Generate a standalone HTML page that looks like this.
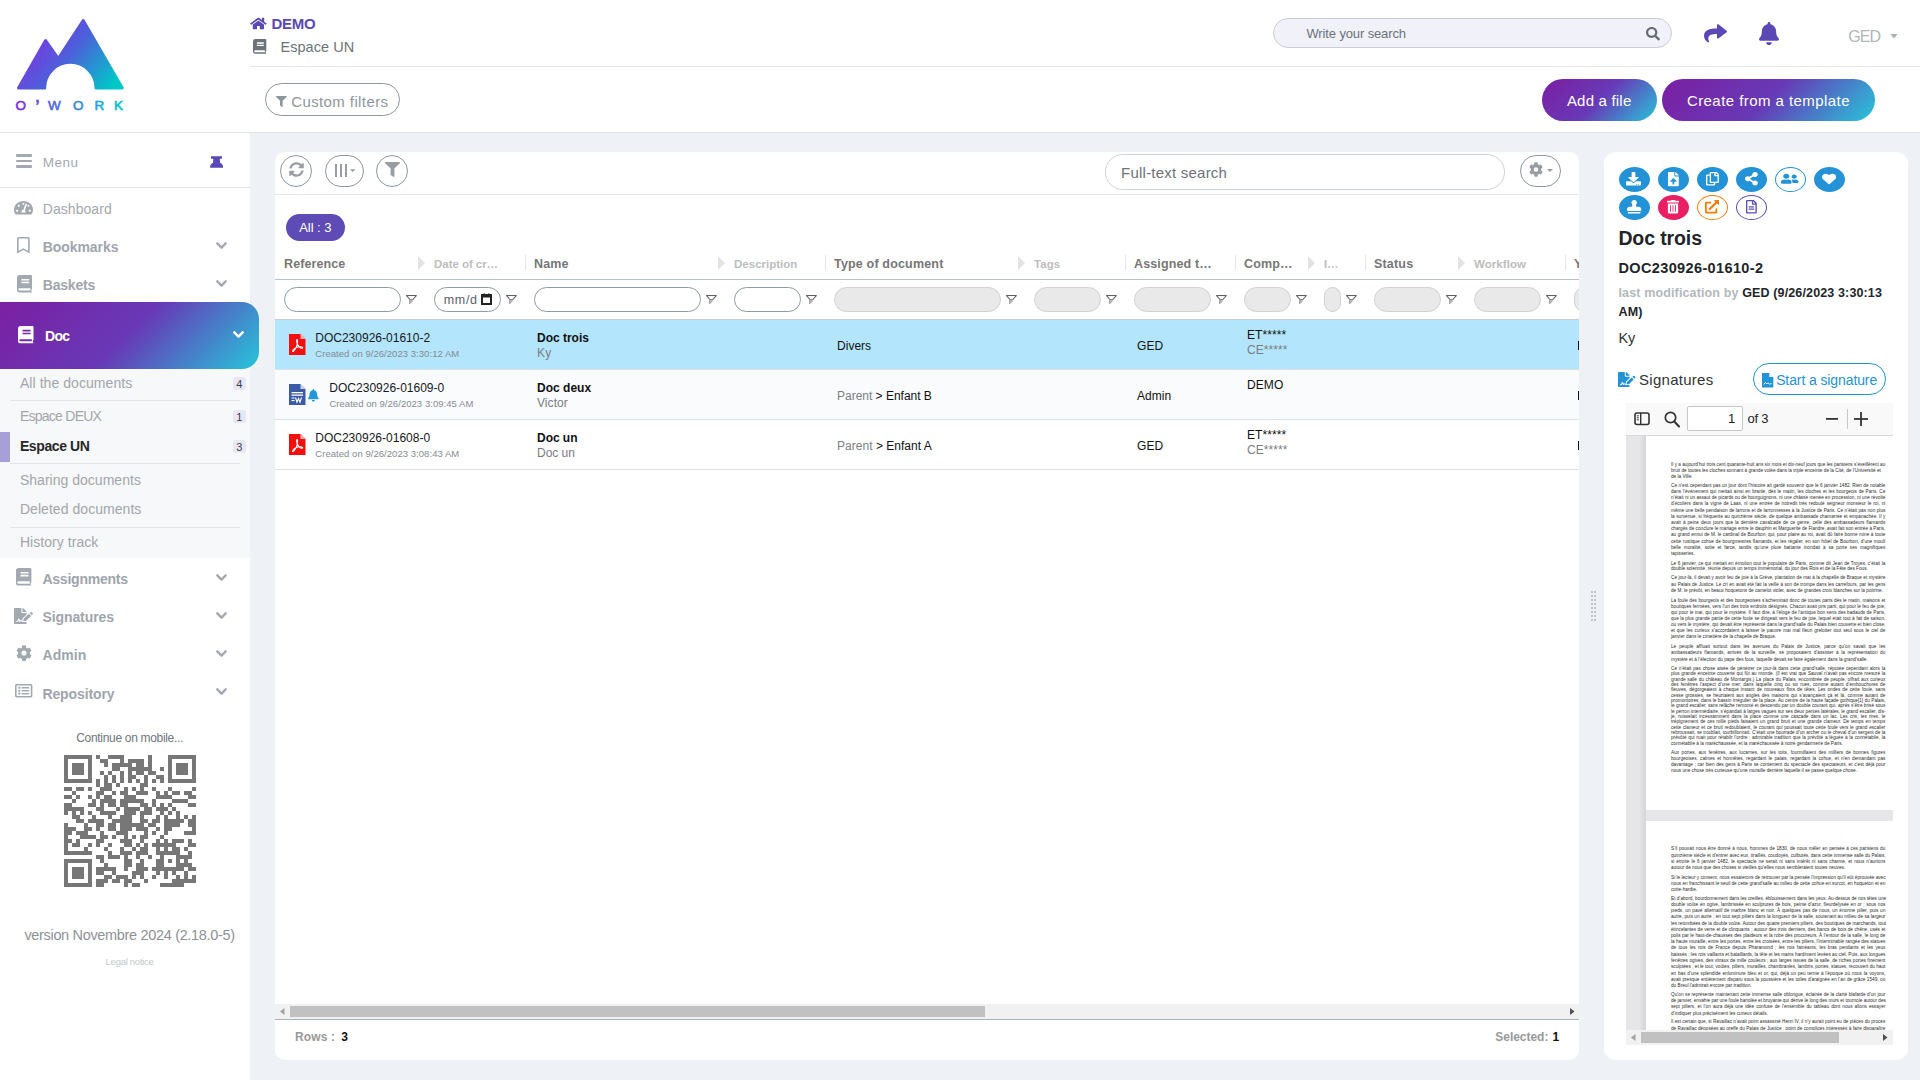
<!DOCTYPE html>
<html><head><meta charset="utf-8">
<style>
*{box-sizing:border-box;margin:0;padding:0}
html,body{width:1920px;height:1080px;overflow:hidden}
body{background:#eef1f6;font-family:"Liberation Sans",sans-serif;position:relative;color:#212529}
.a{position:absolute}
.ic{position:absolute;display:block;overflow:visible}
.t{position:absolute;white-space:nowrap;line-height:1}
.grad{background:linear-gradient(135deg,#7b1fa2 0%,#673ab7 50%,#26c6da 100%)}
</style></head><body>
<div class="a" style="left:0px;top:0px;width:250px;height:1080px;background:#fff"></div>
<div class="a" style="left:250px;top:0px;width:1670px;height:132px;background:#fff"></div>
<div class="a" style="left:0px;top:132px;width:1920px;height:1px;background:#dfe3e8"></div>
<div class="a" style="left:250px;top:66px;width:1670px;height:1px;background:#e3e7eb"></div>
<svg class="ic" style="left:0;top:0;width:140px;height:120px" viewBox="0 0 140 120">
<defs><linearGradient id="lg" x1="0" y1="0.25" x2="1" y2="0.8" gradientUnits="objectBoundingBox">
<stop offset="0" stop-color="#8a2be2"/><stop offset="0.5" stop-color="#4a62da"/><stop offset="1" stop-color="#00c8c8"/></linearGradient>
<linearGradient id="lt" x1="15" y1="0" x2="124" y2="0" gradientUnits="userSpaceOnUse">
<stop offset="0" stop-color="#7d2ae8"/><stop offset="0.5" stop-color="#3f7fd8"/><stop offset="1" stop-color="#00c4cc"/></linearGradient></defs>
<path d="M18.5,88 L45.6,40.5 L58.3,58.5 L83.2,20.5 L122.3,88 L96,88 A25.65,25.65 0 0 0 44.7,88 Z" fill="url(#lg)" stroke="url(#lg)" stroke-width="3" stroke-linejoin="round"/>
<g fill="url(#lt)" stroke="url(#lt)" stroke-width="0.6" font-family="Liberation Sans" font-size="13.5" font-weight="normal">
<text x="15.5" y="109.6">O</text><text x="35.5" y="110" font-size="14" font-weight="bold">’</text><text x="48" y="109.6">W</text><text x="73" y="109.6">O</text><text x="94.5" y="109.6">R</text><text x="114" y="109.6">K</text></g>
</svg>
<div class="a" style="left:16px;top:154px;width:15.5px;height:2.6px;background:#a3a9b0;border-radius:1px"></div>
<div class="a" style="left:16px;top:159.5px;width:15.5px;height:2.6px;background:#a3a9b0;border-radius:1px"></div>
<div class="a" style="left:16px;top:165px;width:15.5px;height:2.6px;background:#a3a9b0;border-radius:1px"></div>
<div class="t" style="left:42.76px;top:155.57px;font-size:13.5px;font-weight:400;color:#a3a9b0;font-family:&quot;Liberation Sans&quot;,sans-serif;letter-spacing:0.466px;">Menu</div>
<svg class="ic" style="left:204px;top:150px;width:26px;height:22px" viewBox="0 0 26 22"><path d="M7.3,6.2 H17.7 Q18,6.2 18,6.6 V8.5 Q18,8.8 17.6,8.8 H15.8 L16.1,12.8 Q19.3,14.3 19.1,17.3 Q19.1,17.8 18.6,17.8 H6.6 Q6.1,17.8 6.1,17.3 Q6,14.3 9.1,12.8 L9.3,8.8 H7.3 Q7,8.8 7,8.5 V6.6 Q7,6.2 7.3,6.2Z" fill="#5b48b8"/></svg>
<div class="a" style="left:0px;top:187px;width:250px;height:1px;background:#dfe3e8"></div>
<svg class="ic" style="left:14px;top:199.5px;width:19px;height:15.5px" viewBox="0 0 576 512" preserveAspectRatio="none"><path fill="#a3a9b0" fill-rule="evenodd" d="M288 32C128.94 32 0 160.94 0 320c0 52.8 14.25 102.26 39.06 144.8 5.61 9.62 16.3 15.2 27.44 15.2h443c11.14 0 21.83-5.58 27.44-15.2C561.75 422.26 576 372.8 576 320c0-159.06-128.94-288-288-288zm0 64c14.71 0 26.58 10.13 30.32 23.65-1.11 2.26-2.64 4.23-3.45 6.67l-9.22 27.67c-5.13 3.49-10.97 6.01-17.64 6.01-17.67 0-32-14.33-32-32S270.33 96 288 96zM96 384c-17.67 0-32-14.33-32-32s14.33-32 32-32 32 14.33 32 32-14.330 32-32 32zm48-160c-17.67 0-32-14.33-32-32s14.33-32 32-32 32 14.33 32 32-14.33 32-32 32zm246.77-72.41l-61.33 184C343.13 347.33 352 364.54 352 384c0 11.72-3.38 22.55-8.88 32H232.88c-5.5-9.45-8.88-20.28-8.88-32 0-33.94 26.5-61.43 59.9-63.59l61.34-184.01c4.17-12.56 17.73-19.45 30.36-15.17 12.57 4.19 19.35 17.79 15.17 30.36zm14.66 57.2l15.52-46.55c3.47-1.29 7.13-2.23 11.05-2.23 17.67 0 32 14.33 32 32s-14.33 32-32 32c-11.38-.01-20.89-6.28-26.57-15.22zM480 384c-17.67 0-32-14.33-32-32s14.33-32 32-32 32 14.33 32 32-14.33 32-32 32z"/></svg>
<div class="t" style="left:42.74px;top:202.15px;font-size:14px;font-weight:400;color:#a3a9b0;font-family:&quot;Liberation Sans&quot;,sans-serif;letter-spacing:0.064px;">Dashboard</div>
<svg class="ic" style="left:17.3px;top:237px;width:12.7px;height:16.6px" viewBox="0 0 384 512" preserveAspectRatio="none"><path fill="#a3a9b0" fill-rule="evenodd" d="M336 0H48C21.49 0 0 21.49 0 48v464l192-112 192 112V48c0-26.51-21.49-48-48-48zm0 428.43l-144-84-144 84V54a6 6 0 0 1 6-6h276c3.314 0 6 2.683 6 5.996V428.43z"/></svg>
<div class="t" style="left:42.74px;top:239.85px;font-size:14px;font-weight:700;color:#9ea5ad;font-family:&quot;Liberation Sans&quot;,sans-serif;letter-spacing:-0.065px;">Bookmarks</div>
<svg class="ic" style="left:216px;top:242px;width:11px;height:7.5px" viewBox="0 0 11 7.5"><path d="M1.3,1.3L5.5,5.6L9.7,1.3" fill="none" stroke="#a3a9b0" stroke-width="2.4" stroke-linecap="round" stroke-linejoin="round"/></svg>
<svg class="ic" style="left:16.5px;top:274.6px;width:15px;height:17.4px" viewBox="0 0 15 17" preserveAspectRatio="none"><path fill="#a3a9b0" fill-rule="evenodd" d="M2.6,0H14Q15,0 15,1V13.6Q15,14.3 14.3,14.6V16.1Q15,16.3 15,16.7V17H2.6Q0,17 0,14.4V2.6Q0,0 2.6,0ZM4.4,3.8H12.2V5.4H4.4ZM4.4,6.6H12.2V8.1H4.4ZM2.4,12.9H13.4V15.1H2.4Q1.3,15.1 1.3,14Q1.3,12.9 2.4,12.9Z"/></svg>
<div class="t" style="left:42.74px;top:277.65px;font-size:14px;font-weight:700;color:#9ea5ad;font-family:&quot;Liberation Sans&quot;,sans-serif;letter-spacing:-0.189px;">Baskets</div>
<svg class="ic" style="left:216px;top:280px;width:11px;height:7.5px" viewBox="0 0 11 7.5"><path d="M1.3,1.3L5.5,5.6L9.7,1.3" fill="none" stroke="#a3a9b0" stroke-width="2.4" stroke-linecap="round" stroke-linejoin="round"/></svg>
<div class="a grad" style="left:0;top:302px;width:259px;height:67px;border-radius:0 17px 17px 0"></div>
<svg class="ic" style="left:18px;top:325.7px;width:15.5px;height:17.3px" viewBox="0 0 15 17" preserveAspectRatio="none"><path fill="#fff" fill-rule="evenodd" d="M2.6,0H14Q15,0 15,1V13.6Q15,14.3 14.3,14.6V16.1Q15,16.3 15,16.7V17H2.6Q0,17 0,14.4V2.6Q0,0 2.6,0ZM4.4,3.8H12.2V5.4H4.4ZM4.4,6.6H12.2V8.1H4.4ZM2.4,12.9H13.4V15.1H2.4Q1.3,15.1 1.3,14Q1.3,12.9 2.4,12.9Z"/></svg>
<div class="t" style="left:45.04px;top:329.15px;font-size:14px;font-weight:700;color:#fff;font-family:&quot;Liberation Sans&quot;,sans-serif;letter-spacing:-0.691px;">Doc</div>
<svg class="ic" style="left:233px;top:330.8px;width:11px;height:7.5px" viewBox="0 0 11 7.5"><path d="M1.3,1.3L5.5,5.6L9.7,1.3" fill="none" stroke="#fff" stroke-width="2.4" stroke-linecap="round" stroke-linejoin="round"/></svg>
<div class="a" style="left:0px;top:369px;width:250px;height:189px;background:#f7f8fa"></div>
<div class="t" style="left:19.94px;top:376.05px;font-size:14px;font-weight:400;color:#a2a6aa;font-family:&quot;Liberation Sans&quot;,sans-serif;letter-spacing:0.064px;">All the documents</div>
<div class="a" style="left:233px;top:376.5px;width:12.8px;height:13.7px;background:#e9e6f5;border-radius:3px"></div>
<div class="t" style="left:236.36px;top:378.69px;font-size:11px;font-weight:400;color:#3a3f44;font-family:&quot;Liberation Sans&quot;,sans-serif;letter-spacing:0.145px;">4</div>
<div class="a" style="left:10px;top:400px;width:230px;height:1px;background:#e1e4e8"></div>
<div class="t" style="left:19.94px;top:409.15px;font-size:14px;font-weight:400;color:#a2a6aa;font-family:&quot;Liberation Sans&quot;,sans-serif;letter-spacing:-0.746px;">Espace DEUX</div>
<div class="a" style="left:233px;top:409.8px;width:12.8px;height:13.7px;background:#e9e6f5;border-radius:3px"></div>
<div class="t" style="left:236.36px;top:411.99px;font-size:11px;font-weight:400;color:#3a3f44;font-family:&quot;Liberation Sans&quot;,sans-serif;letter-spacing:0.145px;">1</div>
<div class="a" style="left:0px;top:432px;width:10px;height:30px;background:#a69fd8"></div>
<div class="t" style="left:19.94px;top:438.95px;font-size:14px;font-weight:700;color:#25282b;font-family:&quot;Liberation Sans&quot;,sans-serif;letter-spacing:-0.408px;">Espace UN</div>
<div class="a" style="left:233px;top:439.6px;width:12.8px;height:13.7px;background:#e9e6f5;border-radius:3px"></div>
<div class="t" style="left:236.36px;top:441.79px;font-size:11px;font-weight:400;color:#3a3f44;font-family:&quot;Liberation Sans&quot;,sans-serif;letter-spacing:0.145px;">3</div>
<div class="a" style="left:10px;top:463px;width:230px;height:1px;background:#e1e4e8"></div>
<div class="t" style="left:19.94px;top:473.15px;font-size:14px;font-weight:400;color:#a2a6aa;font-family:&quot;Liberation Sans&quot;,sans-serif;letter-spacing:0.020px;">Sharing documents</div>
<div class="t" style="left:19.94px;top:502.15px;font-size:14px;font-weight:400;color:#a2a6aa;font-family:&quot;Liberation Sans&quot;,sans-serif;letter-spacing:0.049px;">Deleted documents</div>
<div class="a" style="left:10px;top:526.5px;width:230px;height:1px;background:#e1e4e8"></div>
<div class="t" style="left:19.94px;top:535.45px;font-size:14px;font-weight:400;color:#a2a6aa;font-family:&quot;Liberation Sans&quot;,sans-serif;letter-spacing:0.053px;">History track</div>
<svg class="ic" style="left:16px;top:568px;width:15.4px;height:17.6px" viewBox="0 0 15 17" preserveAspectRatio="none"><path fill="#a3a9b0" fill-rule="evenodd" d="M2.6,0H14Q15,0 15,1V13.6Q15,14.3 14.3,14.6V16.1Q15,16.3 15,16.7V17H2.6Q0,17 0,14.4V2.6Q0,0 2.6,0ZM4.4,3.8H12.2V5.4H4.4ZM4.4,6.6H12.2V8.1H4.4ZM2.4,12.9H13.4V15.1H2.4Q1.3,15.1 1.3,14Q1.3,12.9 2.4,12.9Z"/></svg>
<div class="t" style="left:42.44px;top:572.15px;font-size:14px;font-weight:700;color:#9ea5ad;font-family:&quot;Liberation Sans&quot;,sans-serif;letter-spacing:-0.231px;">Assignments</div>
<svg class="ic" style="left:216px;top:573.5px;width:11px;height:7.5px" viewBox="0 0 11 7.5"><path d="M1.3,1.3L5.5,5.6L9.7,1.3" fill="none" stroke="#a3a9b0" stroke-width="2.4" stroke-linecap="round" stroke-linejoin="round"/></svg>
<svg class="ic" style="left:14px;top:607.6px;width:19px;height:16px" viewBox="0 0 576 512" preserveAspectRatio="none"><path fill="#a3a9b0" fill-rule="evenodd" d="M218.17 424.14c-2.95-5.92-8.09-6.52-10.17-6.52s-7.22.59-10.02 6.19l-7.67 15.34c-6.37 12.78-25.03 11.37-29.48-2.09L144 386.59l-10.61 31.88c-5.89 17.66-22.38 29.53-41 29.53H80c-8.84 0-16-7.16-16-16s7.16-16 16-16h12.39c4.83 0 9.11-3.08 10.64-7.66l18.19-54.64c3.3-9.81 12.44-16.41 22.78-16.41s19.48 6.59 22.77 16.41l13.88 41.64c19.75-16.19 54.06-9.7 66 14.16 1.89 3.78 5.49 5.95 9.36 6.26v-82.12l128-127.09V160H248c-13.2 0-24-10.8-24-24V0H24C10.7 0 0 10.7 0 24v464c0 13.3 10.7 24 24 24h336c13.3 0 24-10.7 24-24v-40l-128-.11c-16.12-.31-30.58-9.28-37.83-23.75zM384 121.9c0-6.3-2.5-12.4-7-16.9L279.1 7c-4.5-4.5-10.6-7-17-7H256v128h128v-6.1zm-96 225.06V416h68.99l161.68-162.78-67.88-67.88L288 346.96zm280.54-179.63l-31.870-31.87c-9.94-9.94-26.07-9.94-36.01 0l-27.25 27.25 67.88 67.88 27.25-27.25c9.95-9.94 9.95-26.07 0-36.01z"/></svg>
<div class="t" style="left:42.44px;top:610.05px;font-size:14px;font-weight:700;color:#9ea5ad;font-family:&quot;Liberation Sans&quot;,sans-serif;letter-spacing:-0.088px;">Signatures</div>
<svg class="ic" style="left:216px;top:611.5px;width:11px;height:7.5px" viewBox="0 0 11 7.5"><path d="M1.3,1.3L5.5,5.6L9.7,1.3" fill="none" stroke="#a3a9b0" stroke-width="2.4" stroke-linecap="round" stroke-linejoin="round"/></svg>
<svg class="ic" style="left:16px;top:645px;width:16px;height:16.3px" viewBox="0 0 512 512" preserveAspectRatio="none"><path fill="#a3a9b0" fill-rule="evenodd" d="M487.4 315.7l-42.6-24.6c4.3-23.2 4.3-47 0-70.2l42.6-24.6c4.9-2.8 7.1-8.6 5.5-14-11.1-35.6-30-67.8-54.7-94.6-3.8-4.1-10-5.1-14.8-2.3L380.8 110c-17.9-15.4-38.5-27.3-60.8-35.1V25.8c0-5.6-3.9-10.5-9.4-11.7-36.7-8.2-74.3-7.8-109.2 0-5.5 1.2-9.4 6.1-9.4 11.7V75c-22.2 7.9-42.8 19.8-60.8 35.1L88.7 85.5c-4.9-2.8-11-1.9-14.8 2.3-24.7 26.7-43.6 58.9-54.7 94.6-1.7 5.4.6 11.2 5.5 14L67.3 221c-4.3 23.2-4.3 47 0 70.2l-42.6 24.6c-4.9 2.8-7.1 8.6-5.5 14 11.1 35.6 30 67.8 54.7 94.6 3.8 4.1 10 5.1 14.8 2.3l42.6-24.6c17.9 15.4 38.5 27.3 60.8 35.1v49.2c0 5.6 3.9 10.5 9.4 11.7 36.7 8.2 74.3 7.8 109.2 0 5.5-1.2 9.4-6.1 9.4-11.7v-49.2c22.2-7.9 42.8-19.8 60.8-35.1l42.6 24.6c4.9 2.8 11 1.9 14.8-2.3 24.7-26.7 43.6-58.9 54.7-94.6 1.5-5.5-.7-11.3-5.6-14.1zM256 336c-44.1 0-80-35.9-80-80s35.9-80 80-80 80 35.9 80 80-35.9 80-80 80z"/></svg>
<div class="t" style="left:42.44px;top:648.15px;font-size:14px;font-weight:700;color:#9ea5ad;font-family:&quot;Liberation Sans&quot;,sans-serif;letter-spacing:0.083px;">Admin</div>
<svg class="ic" style="left:216px;top:649.5px;width:11px;height:7.5px" viewBox="0 0 11 7.5"><path d="M1.3,1.3L5.5,5.6L9.7,1.3" fill="none" stroke="#a3a9b0" stroke-width="2.4" stroke-linecap="round" stroke-linejoin="round"/></svg>
<svg class="ic" style="left:15.4px;top:683px;width:17.4px;height:15.5px" viewBox="0 0 512 512" preserveAspectRatio="none"><path fill="#a3a9b0" fill-rule="evenodd" d="M464 32H48C21.49 32 0 53.49 0 80v352c0 26.51 21.49 48 48 48h416c26.51 0 48-21.49 48-48V80c0-26.51-21.49-48-48-48zm-6 400H54a6 6 0 0 1-6-6V86a6 6 0 0 1 6-6h404a6 6 0 0 1 6 6v340a6 6 0 0 1-6 6zm-42-92v24c0 6.627-5.373 12-12 12H204c-6.627 0-12-5.373-12-12v-24c0-6.627 5.373-12 12-12h200c6.627 0 12 5.373 12 12zm0-96v24c0 6.627-5.373 12-12 12H204c-6.627 0-12-5.373-12-12v-24c0-6.627 5.373-12 12-12h200c6.627 0 12 5.373 12 12zm0-96v24c0 6.627-5.373 12-12 12H204c-6.627 0-12-5.373-12-12v-24c0-6.627 5.373-12 12-12h200c6.627 0 12 5.373 12 12zm-252 12c0 19.882-16.118 36-36 36s-36-16.118-36-36 16.118-36 36-36 36 16.118 36 36zm0 96c0 19.882-16.118 36-36 36s-36-16.118-36-36 16.118-36 36-36 36 16.118 36 36zm0 96c0 19.882-16.118 36-36 36s-36-16.118-36-36 16.118-36 36-36 36 16.118 36 36z"/></svg>
<div class="t" style="left:42.44px;top:686.55px;font-size:14px;font-weight:700;color:#9ea5ad;font-family:&quot;Liberation Sans&quot;,sans-serif;letter-spacing:-0.114px;">Repository</div>
<svg class="ic" style="left:216px;top:687.5px;width:11px;height:7.5px" viewBox="0 0 11 7.5"><path d="M1.3,1.3L5.5,5.6L9.7,1.3" fill="none" stroke="#a3a9b0" stroke-width="2.4" stroke-linecap="round" stroke-linejoin="round"/></svg>
<div class="t" style="left:76.22px;top:731.54px;font-size:12px;font-weight:400;color:#6f767c;font-family:&quot;Liberation Sans&quot;,sans-serif;letter-spacing:-0.313px;">Continue on mobile...</div>
<svg class="ic" style="left:64px;top:755px;width:132px;height:132px" viewBox="0 0 132 132" shape-rendering="crispEdges"><path fill="#777" d="M0,0h28v4h-28zM32,0h4v4h-4zM44,0h16v4h-16zM84,0h4v4h-4zM104,0h28v4h-28zM0,4h4v4h-4zM24,4h4v4h-4zM36,4h8v4h-8zM56,4h4v4h-4zM64,4h16v4h-16zM84,4h4v4h-4zM104,4h4v4h-4zM128,4h4v4h-4zM0,8h4v4h-4zM8,8h12v4h-12zM24,8h4v4h-4zM40,8h4v4h-4zM48,8h20v4h-20zM72,8h8v4h-8zM84,8h4v4h-4zM104,8h4v4h-4zM112,8h12v4h-12zM128,8h4v4h-4zM0,12h4v4h-4zM8,12h12v4h-12zM24,12h4v4h-4zM48,12h8v4h-8zM64,12h24v4h-24zM96,12h4v4h-4zM104,12h4v4h-4zM112,12h12v4h-12zM128,12h4v4h-4zM0,16h4v4h-4zM8,16h12v4h-12zM24,16h4v4h-4zM36,16h4v4h-4zM44,16h4v4h-4zM56,16h4v4h-4zM64,16h4v4h-4zM72,16h8v4h-8zM84,16h8v4h-8zM104,16h4v4h-4zM112,16h12v4h-12zM128,16h4v4h-4zM0,20h4v4h-4zM24,20h4v4h-4zM40,20h4v4h-4zM48,20h4v4h-4zM56,20h4v4h-4zM64,20h8v4h-8zM80,20h4v4h-4zM92,20h8v4h-8zM104,20h4v4h-4zM128,20h4v4h-4zM0,24h28v4h-28zM32,24h4v4h-4zM40,24h4v4h-4zM48,24h4v4h-4zM56,24h4v4h-4zM64,24h4v4h-4zM72,24h4v4h-4zM80,24h4v4h-4zM88,24h4v4h-4zM96,24h4v4h-4zM104,24h28v4h-28zM32,28h4v4h-4zM40,28h8v4h-8zM52,28h4v4h-4zM76,28h8v4h-8zM0,32h8v4h-8zM12,32h8v4h-8zM24,32h4v4h-4zM36,32h12v4h-12zM60,32h4v4h-4zM68,32h4v4h-4zM76,32h4v4h-4zM88,32h4v4h-4zM104,32h4v4h-4zM128,32h4v4h-4zM8,36h4v4h-4zM32,36h8v4h-8zM48,36h4v4h-4zM56,36h8v4h-8zM72,36h12v4h-12zM92,36h4v4h-4zM100,36h4v4h-4zM108,36h8v4h-8zM120,36h8v4h-8zM0,40h8v4h-8zM12,40h4v4h-4zM24,40h4v4h-4zM32,40h4v4h-4zM40,40h8v4h-8zM60,40h12v4h-12zM92,40h16v4h-16zM124,40h8v4h-8zM8,44h4v4h-4zM28,44h4v4h-4zM36,44h16v4h-16zM56,44h24v4h-24zM88,44h4v4h-4zM108,44h16v4h-16zM0,48h8v4h-8zM24,48h8v4h-8zM36,48h4v4h-4zM44,48h8v4h-8zM56,48h8v4h-8zM76,48h8v4h-8zM88,48h4v4h-4zM96,48h4v4h-4zM104,48h4v4h-4zM124,48h8v4h-8zM0,52h20v4h-20zM32,52h8v4h-8zM52,52h4v4h-4zM60,52h16v4h-16zM80,52h8v4h-8zM92,52h12v4h-12zM108,52h4v4h-4zM0,56h4v4h-4zM8,56h4v4h-4zM16,56h4v4h-4zM24,56h4v4h-4zM36,56h16v4h-16zM60,56h12v4h-12zM76,56h12v4h-12zM96,56h4v4h-4zM104,56h4v4h-4zM112,56h4v4h-4zM8,60h8v4h-8zM28,60h4v4h-4zM44,60h4v4h-4zM56,60h12v4h-12zM76,60h4v4h-4zM92,60h4v4h-4zM100,60h4v4h-4zM112,60h4v4h-4zM120,60h4v4h-4zM128,60h4v4h-4zM12,64h8v4h-8zM24,64h16v4h-16zM48,64h20v4h-20zM76,64h8v4h-8zM88,64h8v4h-8zM100,64h20v4h-20zM124,64h8v4h-8zM0,68h4v4h-4zM20,68h4v4h-4zM32,68h8v4h-8zM44,68h8v4h-8zM56,68h24v4h-24zM84,68h8v4h-8zM100,68h16v4h-16zM124,68h8v4h-8zM0,72h12v4h-12zM20,72h8v4h-8zM32,72h4v4h-4zM44,72h8v4h-8zM56,72h12v4h-12zM72,72h12v4h-12zM92,72h4v4h-4zM100,72h8v4h-8zM128,72h4v4h-4zM0,76h8v4h-8zM12,76h12v4h-12zM36,76h4v4h-4zM52,76h12v4h-12zM80,76h4v4h-4zM88,76h4v4h-4zM100,76h4v4h-4zM120,76h12v4h-12zM0,80h4v4h-4zM16,80h16v4h-16zM36,80h8v4h-8zM48,80h4v4h-4zM60,80h4v4h-4zM68,80h4v4h-4zM76,80h8v4h-8zM96,80h4v4h-4zM0,84h8v4h-8zM12,84h4v4h-4zM32,84h8v4h-8zM56,84h12v4h-12zM76,84h4v4h-4zM92,84h4v4h-4zM100,84h4v4h-4zM108,84h12v4h-12zM124,84h4v4h-4zM0,88h4v4h-4zM8,88h8v4h-8zM24,88h4v4h-4zM32,88h4v4h-4zM44,88h4v4h-4zM60,88h8v4h-8zM72,88h4v4h-4zM80,88h4v4h-4zM88,88h24v4h-24zM124,88h8v4h-8zM0,92h4v4h-4zM20,92h4v4h-4zM40,92h4v4h-4zM56,92h4v4h-4zM68,92h4v4h-4zM76,92h8v4h-8zM92,92h4v4h-4zM100,92h4v4h-4zM108,92h8v4h-8zM120,92h4v4h-4zM0,96h28v4h-28zM44,96h4v4h-4zM56,96h12v4h-12zM72,96h12v4h-12zM92,96h24v4h-24zM124,96h4v4h-4zM32,100h8v4h-8zM44,100h12v4h-12zM60,100h4v4h-4zM72,100h4v4h-4zM84,100h4v4h-4zM96,100h4v4h-4zM112,100h16v4h-16zM0,104h28v4h-28zM36,104h4v4h-4zM60,104h8v4h-8zM76,104h4v4h-4zM92,104h8v4h-8zM104,104h4v4h-4zM112,104h4v4h-4zM120,104h4v4h-4zM0,108h4v4h-4zM24,108h4v4h-4zM40,108h4v4h-4zM60,108h8v4h-8zM72,108h8v4h-8zM92,108h8v4h-8zM112,108h16v4h-16zM0,112h4v4h-4zM8,112h12v4h-12zM24,112h4v4h-4zM32,112h20v4h-20zM60,112h4v4h-4zM72,112h12v4h-12zM88,112h32v4h-32zM124,112h8v4h-8zM0,116h4v4h-4zM8,116h12v4h-12zM24,116h4v4h-4zM32,116h8v4h-8zM48,116h4v4h-4zM68,116h12v4h-12zM92,116h4v4h-4zM100,116h4v4h-4zM108,116h4v4h-4zM120,116h4v4h-4zM0,120h4v4h-4zM8,120h12v4h-12zM24,120h4v4h-4zM40,120h8v4h-8zM52,120h12v4h-12zM68,120h4v4h-4zM76,120h4v4h-4zM88,120h4v4h-4zM100,120h4v4h-4zM112,120h4v4h-4zM120,120h4v4h-4zM128,120h4v4h-4zM0,124h4v4h-4zM24,124h4v4h-4zM32,124h12v4h-12zM48,124h8v4h-8zM60,124h8v4h-8zM80,124h4v4h-4zM108,124h24v4h-24zM0,128h28v4h-28zM32,128h8v4h-8zM60,128h4v4h-4zM68,128h8v4h-8zM96,128h24v4h-24z"/></svg>
<div class="t" style="left:24.42px;top:928.43px;font-size:14.5px;font-weight:400;color:#8d9296;font-family:&quot;Liberation Sans&quot;,sans-serif;letter-spacing:-0.329px;">version Novembre 2024 (2.18.0-5)</div>
<div class="t" style="left:105.62px;top:956.96px;font-size:9.5px;font-weight:400;color:#c3c7cb;font-family:&quot;Liberation Sans&quot;,sans-serif;letter-spacing:-0.272px;">Legal notice</div>
<svg class="ic" style="left:250px;top:16.8px;width:16.8px;height:13px" viewBox="0 0 576 512" preserveAspectRatio="none"><path fill="#5b48b5" fill-rule="evenodd" d="M280.37 148.26L96 300.11V464a16 16 0 0 0 16 16l112.06-.29a16 16 0 0 0 15.92-16V368a16 16 0 0 1 16-16h64a16 16 0 0 1 16 16v95.64a16 16 0 0 0 16 16.05L464 480a16 16 0 0 0 16-16V300L295.67 148.26a12.190 12.190 0 0 0-15.3 0zM571.6 251.47L488 182.56V44.05a12 12 0 0 0-12-12h-56a12 12 0 0 0-12 12v72.61L318.47 43a48 48 0 0 0-61 0L4.34 251.47a12 12 0 0 0-1.6 16.9l25.5 31A12 12 0 0 0 45.15 301l235.22-193.74a12.19 12.19 0 0 1 15.3 0L530.9 301a12 12 0 0 0 16.9-1.6l25.5-31a12 12 0 0 0-1.7-16.93z"/></svg>
<div class="t" style="left:271.40px;top:16.10px;font-size:15px;font-weight:700;color:#5b48b5;font-family:&quot;Liberation Sans&quot;,sans-serif;letter-spacing:-0.238px;">DEMO</div>
<svg class="ic" style="left:252.7px;top:39px;width:13.3px;height:14.8px" viewBox="0 0 15 17" preserveAspectRatio="none"><path fill="#6c737a" fill-rule="evenodd" d="M2.6,0H14Q15,0 15,1V13.6Q15,14.3 14.3,14.6V16.1Q15,16.3 15,16.7V17H2.6Q0,17 0,14.4V2.6Q0,0 2.6,0ZM4.4,3.8H12.2V5.4H4.4ZM4.4,6.6H12.2V8.1H4.4ZM2.4,12.9H13.4V15.1H2.4Q1.3,15.1 1.3,14Q1.3,12.9 2.4,12.9Z"/></svg>
<div class="t" style="left:280.42px;top:39.53px;font-size:14.5px;font-weight:400;color:#6c737a;font-family:&quot;Liberation Sans&quot;,sans-serif;letter-spacing:0.075px;">Espace UN</div>
<div class="a" style="left:265px;top:83.2px;width:135px;height:33.2px;border:1px solid #8f969c;border-radius:17px;background:#fff"></div>
<svg class="ic" style="left:276.3px;top:96px;width:10.7px;height:11px" viewBox="0 0 512 512" preserveAspectRatio="none"><path fill="#8f969c" fill-rule="evenodd" d="M487.976 0H24.028C2.71 0-8.047 25.866 7.058 40.971L192 225.941V432c0 7.831 3.821 15.17 10.237 19.662l80 55.98C298.02 518.69 320 507.493 320 487.98V225.941l184.947-184.97C520.021 25.896 509.338 0 487.976 0z"/></svg>
<div class="t" style="left:291.20px;top:94.30px;font-size:15px;font-weight:400;color:#8f969c;font-family:&quot;Liberation Sans&quot;,sans-serif;letter-spacing:0.397px;">Custom filters</div>
<div class="a" style="left:1273px;top:18px;width:399px;height:30.4px;background:#f0f1f9;border:1px solid #c8cdd5;border-radius:15px"></div>
<div class="t" style="left:1306.48px;top:27.00px;font-size:13px;font-weight:400;color:#6c737a;font-family:&quot;Liberation Sans&quot;,sans-serif;letter-spacing:-0.131px;">Write your search</div>
<svg class="ic" style="left:1646px;top:27px;width:14px;height:13.5px" viewBox="0 0 512 512" preserveAspectRatio="none"><path fill="#646b72" fill-rule="evenodd" d="M505 442.7L405.3 343c-4.5-4.5-10.6-7-17-7H372c27.6-35.3 44-79.7 44-128C416 93.1 322.9 0 208 0S0 93.1 0 208s93.1 208 208 208c48.3 0 92.7-16.4 128-44v16.3c0 6.4 2.5 12.5 7 17l99.7 99.7c9.4 9.4 24.6 9.4 33.9 0l28.3-28.3c9.4-9.4 9.4-24.6.1-34zM208 336c-70.7 0-128-57.2-128-128 0-70.7 57.2-128 128-128 70.7 0 128 57.2 128 128 0 70.7-57.2 128-128 128z"/></svg>
<svg class="ic" style="left:1704px;top:22.6px;width:23px;height:20.8px" viewBox="0 0 512 512" preserveAspectRatio="none"><path fill="#5b48b5" fill-rule="evenodd" d="M503.691 189.836L327.687 37.851C312.281 24.546 288 35.347 288 56.015v80.053C127.371 137.907 0 170.1 0 322.326c0 61.441 39.581 122.309 83.333 154.132 13.653 9.931 33.111-2.533 28.077-18.631C66.066 312.814 132.917 274.316 288 272.085V360c0 20.7 24.3 31.453 39.687 18.164l176.004-152c11.071-9.562 11.086-26.753 0-36.328z"/></svg>
<svg class="ic" style="left:1759px;top:21.7px;width:20px;height:23px" viewBox="0 0 448 512" preserveAspectRatio="none"><path fill="#5b48b5" fill-rule="evenodd" d="M224 512c35.32 0 63.97-28.65 63.97-64H160.03c0 35.35 28.65 64 63.97 64zm215.39-149.71c-19.32-20.76-55.47-51.99-55.470-154.29 0-77.7-54.48-139.9-127.94-155.16V32c0-17.67-14.32-32-31.98-32s-31.98 14.33-31.98 32v20.84C118.56 68.1 64.08 130.3 64.08 208c0 102.3-36.15 133.53-55.47 154.29-6 6.45-8.66 14.16-8.61 21.71.11 16.4 12.98 32 32.1 32h383.8c19.12 0 32-15.6 32.1-32 .05-7.55-2.61-15.27-8.61-21.710z"/></svg>
<div class="t" style="left:1848.16px;top:29.46px;font-size:16px;font-weight:400;color:#afb6bc;font-family:&quot;Liberation Sans&quot;,sans-serif;letter-spacing:-0.851px;">GED</div>
<svg class="ic" style="left:1890px;top:34px;width:8px;height:4.5px" viewBox="0 0 8 5"><path d="M0,0H8L4,5Z" fill="#a9b0b6"/></svg>
<div class="a grad" style="left:1542px;top:79px;width:115px;height:42px;border-radius:21px"></div>
<div class="t" style="left:1566.90px;top:93.30px;font-size:15px;font-weight:400;color:#fff;font-family:&quot;Liberation Sans&quot;,sans-serif;letter-spacing:0.200px;">Add a file</div>
<div class="a grad" style="left:1662px;top:79px;width:213px;height:42px;border-radius:21px"></div>
<div class="t" style="left:1686.90px;top:93.30px;font-size:15px;font-weight:400;color:#fff;font-family:&quot;Liberation Sans&quot;,sans-serif;letter-spacing:0.438px;">Create from a template</div>
<div class="a" style="left:275px;top:152px;width:1304px;height:908px;background:#fff;border-radius:10px"></div>
<div class="a" style="left:280px;top:155px;width:32px;height:32px;border:1px solid #8f969c;border-radius:50%"></div>
<svg class="ic" style="left:288.5px;top:162px;width:15px;height:15px" viewBox="0 0 512 512" preserveAspectRatio="none"><path fill="#979da3" fill-rule="evenodd" d="M370.72 133.28C339.458 104.008 298.888 87.962 255.848 88c-77.458.068-144.328 53.178-162.791 126.85-1.344 5.363-6.122 9.15-11.651 9.15H24.103c-7.498 0-13.194-6.807-11.807-14.176C33.933 94.924 134.813 8 256 8c66.448 0 126.791 26.136 171.315 68.685L463.03 40.97C478.149 25.851 504 36.559 504 57.941V192c0 13.255-10.745 24-24 24H345.941c-21.382 0-32.09-25.851-16.971-40.971l41.75-41.749zM32 296h134.059c21.382 0 32.09 25.851 16.971 40.971l-41.75 41.75c31.262 29.273 71.835 45.319 114.876 45.28 77.418-.07 144.315-53.144 162.787-126.849 1.344-5.363 6.122-9.15 11.651-9.15h57.304c7.498 0 13.194 6.807 11.807 14.176C478.067 417.076 377.187 504 256 504c-66.448 0-126.791-26.136-171.315-68.685L48.97 471.03C33.851 486.149 8 475.441 8 454.059V320c0-13.255 10.745-24 24-24z"/></svg>
<div class="a" style="left:325px;top:155px;width:39px;height:32px;border:1px solid #8f969c;border-radius:16px"></div>
<div class="a" style="left:334.5px;top:164px;width:2.2px;height:13px;background:#979da3"></div>
<div class="a" style="left:339.5px;top:164px;width:2.2px;height:13px;background:#979da3"></div>
<div class="a" style="left:344.5px;top:164px;width:2.2px;height:13px;background:#979da3"></div>
<svg class="ic" style="left:349.5px;top:169px;width:5.5px;height:3px" viewBox="0 0 6 3"><path d="M0,0H6L3,3Z" fill="#979da3"/></svg>
<div class="a" style="left:376px;top:155px;width:32px;height:32px;border:1px solid #8f969c;border-radius:50%"></div>
<svg class="ic" style="left:385px;top:162px;width:15px;height:15px" viewBox="0 0 512 512" preserveAspectRatio="none"><path fill="#979da3" fill-rule="evenodd" d="M487.976 0H24.028C2.71 0-8.047 25.866 7.058 40.971L192 225.941V432c0 7.831 3.821 15.17 10.237 19.662l80 55.98C298.02 518.69 320 507.493 320 487.98V225.941l184.947-184.97C520.021 25.896 509.338 0 487.976 0z"/></svg>
<div class="a" style="left:275px;top:194px;width:1304px;height:1px;background:#e3e6ea"></div>
<div class="a" style="left:1105px;top:154px;width:399.5px;height:36px;border:1px solid #ccd3da;border-radius:18px;background:#fff"></div>
<div class="t" style="left:1121.10px;top:165.30px;font-size:15px;font-weight:400;color:#6c737a;font-family:&quot;Liberation Sans&quot;,sans-serif;letter-spacing:0.219px;">Full-text search</div>
<div class="a" style="left:1520px;top:155px;width:41px;height:32px;border:1px solid #8f969c;border-radius:16px"></div>
<svg class="ic" style="left:1529px;top:162px;width:14px;height:15px" viewBox="0 0 512 512" preserveAspectRatio="none"><path fill="#979da3" fill-rule="evenodd" d="M487.4 315.7l-42.6-24.6c4.3-23.2 4.3-47 0-70.2l42.6-24.6c4.9-2.8 7.1-8.6 5.5-14-11.1-35.6-30-67.8-54.7-94.6-3.8-4.1-10-5.1-14.8-2.3L380.8 110c-17.9-15.4-38.5-27.3-60.8-35.1V25.8c0-5.6-3.9-10.5-9.4-11.7-36.7-8.2-74.3-7.8-109.2 0-5.5 1.2-9.4 6.1-9.4 11.7V75c-22.2 7.9-42.8 19.8-60.8 35.1L88.7 85.5c-4.9-2.8-11-1.9-14.8 2.3-24.7 26.7-43.6 58.9-54.7 94.6-1.7 5.4.6 11.2 5.5 14L67.3 221c-4.3 23.2-4.3 47 0 70.2l-42.6 24.6c-4.9 2.8-7.1 8.6-5.5 14 11.1 35.6 30 67.8 54.7 94.6 3.8 4.1 10 5.1 14.8 2.3l42.6-24.6c17.9 15.4 38.5 27.3 60.8 35.1v49.2c0 5.6 3.9 10.5 9.4 11.7 36.7 8.2 74.3 7.8 109.2 0 5.5-1.2 9.4-6.1 9.4-11.7v-49.2c22.2-7.9 42.8-19.8 60.8-35.1l42.6 24.6c4.9 2.8 11 1.9 14.8-2.3 24.7-26.7 43.6-58.9 54.7-94.6 1.5-5.5-.7-11.3-5.6-14.1zM256 336c-44.1 0-80-35.9-80-80s35.9-80 80-80 80 35.9 80 80-35.9 80-80 80z"/></svg>
<svg class="ic" style="left:1547px;top:169px;width:6px;height:3px" viewBox="0 0 6 3"><path d="M0,0H6L3,3Z" fill="#979da3"/></svg>
<div class="a" style="left:286px;top:214px;width:59px;height:27px;background:#5f4bb6;border-radius:14px"></div>
<div class="t" style="left:299.18px;top:221.00px;font-size:13px;font-weight:400;color:#fff;font-family:&quot;Liberation Sans&quot;,sans-serif;letter-spacing:-0.044px;">All : 3</div>
<div class="t" style="left:284.00px;top:257.72px;font-size:12.5px;font-weight:700;color:#777;font-family:&quot;Liberation Sans&quot;,sans-serif;letter-spacing:0.102px;">Reference</div>
<svg class="ic" style="left:418px;top:256px;width:7px;height:14px" viewBox="0 0 7 14"><path d="M0,0L7,7L0,14Z" fill="#e3e3e3"/></svg>
<div class="t" style="left:434.04px;top:258.77px;font-size:11.5px;font-weight:700;color:#bdbdbd;font-family:&quot;Liberation Sans&quot;,sans-serif;letter-spacing:-0.049px;">Date of cr…</div>
<div class="t" style="left:534.00px;top:257.72px;font-size:12.5px;font-weight:700;color:#777;font-family:&quot;Liberation Sans&quot;,sans-serif;letter-spacing:0.132px;">Name</div>
<svg class="ic" style="left:718px;top:256px;width:7px;height:14px" viewBox="0 0 7 14"><path d="M0,0L7,7L0,14Z" fill="#e3e3e3"/></svg>
<div class="t" style="left:734.04px;top:258.77px;font-size:11.5px;font-weight:700;color:#bdbdbd;font-family:&quot;Liberation Sans&quot;,sans-serif;letter-spacing:0.004px;">Description</div>
<div class="t" style="left:834.00px;top:257.72px;font-size:12.5px;font-weight:700;color:#777;font-family:&quot;Liberation Sans&quot;,sans-serif;letter-spacing:0.172px;">Type of document</div>
<svg class="ic" style="left:1018px;top:256px;width:7px;height:14px" viewBox="0 0 7 14"><path d="M0,0L7,7L0,14Z" fill="#e3e3e3"/></svg>
<div class="t" style="left:1034.04px;top:258.77px;font-size:11.5px;font-weight:700;color:#bdbdbd;font-family:&quot;Liberation Sans&quot;,sans-serif;letter-spacing:0.026px;">Tags</div>
<div class="t" style="left:1134.00px;top:257.72px;font-size:12.5px;font-weight:700;color:#777;font-family:&quot;Liberation Sans&quot;,sans-serif;letter-spacing:0.134px;">Assigned t…</div>
<div class="t" style="left:1244.00px;top:257.72px;font-size:12.5px;font-weight:700;color:#777;font-family:&quot;Liberation Sans&quot;,sans-serif;letter-spacing:0.131px;">Comp…</div>
<svg class="ic" style="left:1308px;top:256px;width:7px;height:14px" viewBox="0 0 7 14"><path d="M0,0L7,7L0,14Z" fill="#e3e3e3"/></svg>
<div class="t" style="left:1324.04px;top:258.77px;font-size:11.5px;font-weight:700;color:#bdbdbd;font-family:&quot;Liberation Sans&quot;,sans-serif;letter-spacing:-0.199px;">I…</div>
<div class="t" style="left:1374.00px;top:257.72px;font-size:12.5px;font-weight:700;color:#777;font-family:&quot;Liberation Sans&quot;,sans-serif;letter-spacing:0.179px;">Status</div>
<svg class="ic" style="left:1458px;top:256px;width:7px;height:14px" viewBox="0 0 7 14"><path d="M0,0L7,7L0,14Z" fill="#e3e3e3"/></svg>
<div class="t" style="left:1474.04px;top:258.77px;font-size:11.5px;font-weight:700;color:#bdbdbd;font-family:&quot;Liberation Sans&quot;,sans-serif;letter-spacing:0.064px;">Workflow</div>
<div class="t" style="left:1574.00px;top:257.72px;font-size:12.5px;font-weight:700;color:#777;font-family:&quot;Liberation Sans&quot;,sans-serif;">Y</div>
<div class="a" style="left:524.5px;top:255px;width:1px;height:15px;background:#e6e6e6"></div>
<div class="a" style="left:824.5px;top:255px;width:1px;height:15px;background:#e6e6e6"></div>
<div class="a" style="left:1124.5px;top:255px;width:1px;height:15px;background:#e6e6e6"></div>
<div class="a" style="left:1234.5px;top:255px;width:1px;height:15px;background:#e6e6e6"></div>
<div class="a" style="left:1364.5px;top:255px;width:1px;height:15px;background:#e6e6e6"></div>
<div class="a" style="left:1564.5px;top:255px;width:1px;height:15px;background:#e6e6e6"></div>
<div class="a" style="left:275px;top:195px;width:1304px;height:865px;overflow:hidden;border-radius:0 0 10px 10px">
</div>
<div class="a" style="left:275px;top:279px;width:1304px;height:1.3px;background:#b8c2c8"></div>
<div class="a" style="left:284.2px;top:287.2px;width:116.5px;height:24.5px;background:#fff;border:1px solid #8c9ea2;border-radius:12.5px"></div>
<svg class="ic" style="left:405.8px;top:295px;width:11px;height:10px" viewBox="0 0 11 10"><path d="M0.55,0.55H10.3L6.9,4.5H3.9Z" fill="none" stroke="#606060" stroke-width="1.1" stroke-linejoin="round"/><path d="M3.5,4.6H6.9L6.8,6.6L3.6,9.2Z" fill="#b9b9b9"/><path d="M3.7,4.8V9" stroke="#8a8a8a" stroke-width="0.8"/></svg>
<div class="a" style="left:434.2px;top:287.2px;width:66.5px;height:24.5px;background:#fff;border:1px solid #8c9ea2;border-radius:12.5px"></div>
<svg class="ic" style="left:505.8px;top:295px;width:11px;height:10px" viewBox="0 0 11 10"><path d="M0.55,0.55H10.3L6.9,4.5H3.9Z" fill="none" stroke="#606060" stroke-width="1.1" stroke-linejoin="round"/><path d="M3.5,4.6H6.9L6.8,6.6L3.6,9.2Z" fill="#b9b9b9"/><path d="M3.7,4.8V9" stroke="#8a8a8a" stroke-width="0.8"/></svg>
<div class="a" style="left:534.2px;top:287.2px;width:166.5px;height:24.5px;background:#fff;border:1px solid #8c9ea2;border-radius:12.5px"></div>
<svg class="ic" style="left:705.8px;top:295px;width:11px;height:10px" viewBox="0 0 11 10"><path d="M0.55,0.55H10.3L6.9,4.5H3.9Z" fill="none" stroke="#606060" stroke-width="1.1" stroke-linejoin="round"/><path d="M3.5,4.6H6.9L6.8,6.6L3.6,9.2Z" fill="#b9b9b9"/><path d="M3.7,4.8V9" stroke="#8a8a8a" stroke-width="0.8"/></svg>
<div class="a" style="left:734.2px;top:287.2px;width:66.5px;height:24.5px;background:#fff;border:1px solid #8c9ea2;border-radius:12.5px"></div>
<svg class="ic" style="left:805.8px;top:295px;width:11px;height:10px" viewBox="0 0 11 10"><path d="M0.55,0.55H10.3L6.9,4.5H3.9Z" fill="none" stroke="#606060" stroke-width="1.1" stroke-linejoin="round"/><path d="M3.5,4.6H6.9L6.8,6.6L3.6,9.2Z" fill="#b9b9b9"/><path d="M3.7,4.8V9" stroke="#8a8a8a" stroke-width="0.8"/></svg>
<div class="a" style="left:834.2px;top:287.2px;width:166.5px;height:24.5px;background:#e9e9e9;border:1px solid #cfd3d3;border-radius:12.5px"></div>
<svg class="ic" style="left:1005.8px;top:295px;width:11px;height:10px" viewBox="0 0 11 10"><path d="M0.55,0.55H10.3L6.9,4.5H3.9Z" fill="none" stroke="#606060" stroke-width="1.1" stroke-linejoin="round"/><path d="M3.5,4.6H6.9L6.8,6.6L3.6,9.2Z" fill="#b9b9b9"/><path d="M3.7,4.8V9" stroke="#8a8a8a" stroke-width="0.8"/></svg>
<div class="a" style="left:1034.2px;top:287.2px;width:66.5px;height:24.5px;background:#e9e9e9;border:1px solid #cfd3d3;border-radius:12.5px"></div>
<svg class="ic" style="left:1105.8px;top:295px;width:11px;height:10px" viewBox="0 0 11 10"><path d="M0.55,0.55H10.3L6.9,4.5H3.9Z" fill="none" stroke="#606060" stroke-width="1.1" stroke-linejoin="round"/><path d="M3.5,4.6H6.9L6.8,6.6L3.6,9.2Z" fill="#b9b9b9"/><path d="M3.7,4.8V9" stroke="#8a8a8a" stroke-width="0.8"/></svg>
<div class="a" style="left:1134.2px;top:287.2px;width:76.5px;height:24.5px;background:#e9e9e9;border:1px solid #cfd3d3;border-radius:12.5px"></div>
<svg class="ic" style="left:1215.8px;top:295px;width:11px;height:10px" viewBox="0 0 11 10"><path d="M0.55,0.55H10.3L6.9,4.5H3.9Z" fill="none" stroke="#606060" stroke-width="1.1" stroke-linejoin="round"/><path d="M3.5,4.6H6.9L6.8,6.6L3.6,9.2Z" fill="#b9b9b9"/><path d="M3.7,4.8V9" stroke="#8a8a8a" stroke-width="0.8"/></svg>
<div class="a" style="left:1244.2px;top:287.2px;width:46.5px;height:24.5px;background:#e9e9e9;border:1px solid #cfd3d3;border-radius:12.5px"></div>
<svg class="ic" style="left:1295.8px;top:295px;width:11px;height:10px" viewBox="0 0 11 10"><path d="M0.55,0.55H10.3L6.9,4.5H3.9Z" fill="none" stroke="#606060" stroke-width="1.1" stroke-linejoin="round"/><path d="M3.5,4.6H6.9L6.8,6.6L3.6,9.2Z" fill="#b9b9b9"/><path d="M3.7,4.8V9" stroke="#8a8a8a" stroke-width="0.8"/></svg>
<div class="a" style="left:1324.2px;top:287.2px;width:16.5px;height:24.5px;background:#e9e9e9;border:1px solid #cfd3d3;border-radius:12.5px"></div>
<svg class="ic" style="left:1345.8px;top:295px;width:11px;height:10px" viewBox="0 0 11 10"><path d="M0.55,0.55H10.3L6.9,4.5H3.9Z" fill="none" stroke="#606060" stroke-width="1.1" stroke-linejoin="round"/><path d="M3.5,4.6H6.9L6.8,6.6L3.6,9.2Z" fill="#b9b9b9"/><path d="M3.7,4.8V9" stroke="#8a8a8a" stroke-width="0.8"/></svg>
<div class="a" style="left:1374.2px;top:287.2px;width:66.5px;height:24.5px;background:#e9e9e9;border:1px solid #cfd3d3;border-radius:12.5px"></div>
<svg class="ic" style="left:1445.8px;top:295px;width:11px;height:10px" viewBox="0 0 11 10"><path d="M0.55,0.55H10.3L6.9,4.5H3.9Z" fill="none" stroke="#606060" stroke-width="1.1" stroke-linejoin="round"/><path d="M3.5,4.6H6.9L6.8,6.6L3.6,9.2Z" fill="#b9b9b9"/><path d="M3.7,4.8V9" stroke="#8a8a8a" stroke-width="0.8"/></svg>
<div class="a" style="left:1474.2px;top:287.2px;width:66.5px;height:24.5px;background:#e9e9e9;border:1px solid #cfd3d3;border-radius:12.5px"></div>
<svg class="ic" style="left:1545.8px;top:295px;width:11px;height:10px" viewBox="0 0 11 10"><path d="M0.55,0.55H10.3L6.9,4.5H3.9Z" fill="none" stroke="#606060" stroke-width="1.1" stroke-linejoin="round"/><path d="M3.5,4.6H6.9L6.8,6.6L3.6,9.2Z" fill="#b9b9b9"/><path d="M3.7,4.8V9" stroke="#8a8a8a" stroke-width="0.8"/></svg>
<div class="a" style="left:1574px;top:287.2px;width:20px;height:24.5px;background:#e9e9e9;border:1px solid #cfd3d3;border-radius:12.5px;clip-path:inset(0 15px 0 0)"></div>
<div class="t" style="left:443.80px;top:294.42px;font-size:12.5px;font-weight:400;color:#5c6166;font-family:&quot;Liberation Sans&quot;,sans-serif;letter-spacing:0.656px;">mm/d</div>
<svg class="ic" style="left:480.8px;top:293.2px;width:11px;height:12px" viewBox="0 0 11 12"><rect x="1" y="2" width="9" height="9" fill="none" stroke="#222" stroke-width="2"/><rect x="1" y="2" width="9" height="2.5" fill="#222"/><rect x="2.5" y="0.5" width="1.5" height="2" fill="#222"/><rect x="7" y="0.5" width="1.5" height="2" fill="#222"/></svg>
<div class="a" style="left:275px;top:319px;width:1304px;height:1.3px;background:#c6ccd0"></div>
<div class="a" style="left:275px;top:320px;width:1304px;height:49px;background:#b3e5fc"></div>
<div class="a" style="left:275px;top:369px;width:1304px;height:1px;background:#dbe1e6"></div>
<div class="a" style="left:275px;top:370px;width:1304px;height:49px;background:#fafbfd"></div>
<div class="a" style="left:275px;top:419px;width:1304px;height:1px;background:#dbe1e6"></div>
<div class="a" style="left:275px;top:469px;width:1304px;height:1px;background:#dbe1e6"></div>
<svg class="ic" style="left:289.4px;top:334px;width:16.5px;height:21px" viewBox="0 0 16.5 21"><path d="M0,0H11.5L16.5,5V21H0Z" fill="#f40f0f"/><path d="M11.5,0L16.5,5H11.5Z" fill="#ffb3b3"/><path d="M8.2,5.5C7.2,5.5 7.6,8.5 8.6,10.5C9.8,13 11.5,14.5 13,14.2C14.2,14 13.5,12.8 11.5,12.8C9.2,12.8 5.5,14 4,16.2C3.2,17.4 3.8,18 4.6,17.2C6.5,15.3 8.5,10.5 8.6,7C8.6,6 8.5,5.5 8.2,5.5Z" fill="none" stroke="#fff" stroke-width="1.1"/></svg>
<svg class="ic" style="left:289.4px;top:434px;width:16.5px;height:21px" viewBox="0 0 16.5 21"><path d="M0,0H11.5L16.5,5V21H0Z" fill="#f40f0f"/><path d="M11.5,0L16.5,5H11.5Z" fill="#ffb3b3"/><path d="M8.2,5.5C7.2,5.5 7.6,8.5 8.6,10.5C9.8,13 11.5,14.5 13,14.2C14.2,14 13.5,12.8 11.5,12.8C9.2,12.8 5.5,14 4,16.2C3.2,17.4 3.8,18 4.6,17.2C6.5,15.3 8.5,10.5 8.6,7C8.6,6 8.5,5.5 8.2,5.5Z" fill="none" stroke="#fff" stroke-width="1.1"/></svg>
<svg class="ic" style="left:289px;top:384px;width:16.5px;height:21px" viewBox="0 0 16.5 21"><path d="M0,0H11.5L16.5,5V21H0Z" fill="#3b5aa6"/><path d="M11.5,0L16.5,5H11.5Z" fill="#c9d3ea"/><rect x="2.5" y="8" width="11.5" height="1.3" fill="#fff"/><rect x="2.5" y="10.5" width="11.5" height="1.3" fill="#fff"/><rect x="2.5" y="13.5" width="3" height="1.1" fill="#fff"/><rect x="2.5" y="16" width="3" height="1.1" fill="#fff"/><path d="M6.5,13.5L8,18.2L9.5,14.5L11,18.2L12.5,13.5" fill="none" stroke="#fff" stroke-width="1.1"/></svg>
<svg class="ic" style="left:308px;top:389px;width:10.7px;height:12.7px" viewBox="0 0 448 512" preserveAspectRatio="none"><path fill="#2196d8" fill-rule="evenodd" d="M224 512c35.32 0 63.97-28.65 63.97-64H160.03c0 35.35 28.65 64 63.97 64zm215.39-149.71c-19.32-20.76-55.47-51.99-55.470-154.29 0-77.7-54.48-139.9-127.94-155.16V32c0-17.67-14.32-32-31.98-32s-31.98 14.33-31.98 32v20.84C118.56 68.1 64.08 130.3 64.08 208c0 102.3-36.15 133.53-55.47 154.29-6 6.45-8.66 14.16-8.61 21.71.11 16.4 12.98 32 32.1 32h383.8c19.12 0 32-15.6 32.1-32 .05-7.55-2.61-15.27-8.61-21.710z"/></svg>
<div class="t" style="left:315.22px;top:331.84px;font-size:12px;font-weight:400;color:#16191c;font-family:&quot;Liberation Sans&quot;,sans-serif;letter-spacing:0.011px;">DOC230926-01610-2</div>
<div class="t" style="left:315.32px;top:349.16px;font-size:9.5px;font-weight:400;color:#858b91;font-family:&quot;Liberation Sans&quot;,sans-serif;letter-spacing:0.044px;">Created on 9/26/2023 3:30:12 AM</div>
<div class="t" style="left:329.32px;top:381.84px;font-size:12px;font-weight:400;color:#16191c;font-family:&quot;Liberation Sans&quot;,sans-serif;letter-spacing:0.011px;">DOC230926-01609-0</div>
<div class="t" style="left:329.42px;top:399.16px;font-size:9.5px;font-weight:400;color:#858b91;font-family:&quot;Liberation Sans&quot;,sans-serif;letter-spacing:0.044px;">Created on 9/26/2023 3:09:45 AM</div>
<div class="t" style="left:315.22px;top:431.84px;font-size:12px;font-weight:400;color:#16191c;font-family:&quot;Liberation Sans&quot;,sans-serif;letter-spacing:0.011px;">DOC230926-01608-0</div>
<div class="t" style="left:315.32px;top:449.16px;font-size:9.5px;font-weight:400;color:#858b91;font-family:&quot;Liberation Sans&quot;,sans-serif;letter-spacing:0.044px;">Created on 9/26/2023 3:08:43 AM</div>
<div class="t" style="left:537.02px;top:331.64px;font-size:12px;font-weight:700;color:#111;font-family:&quot;Liberation Sans&quot;,sans-serif;letter-spacing:-0.020px;">Doc trois</div>
<div class="t" style="left:537.02px;top:346.64px;font-size:12px;font-weight:400;color:#777d83;font-family:&quot;Liberation Sans&quot;,sans-serif;letter-spacing:0.162px;">Ky</div>
<div class="t" style="left:537.02px;top:381.64px;font-size:12px;font-weight:700;color:#111;font-family:&quot;Liberation Sans&quot;,sans-serif;letter-spacing:0.016px;">Doc deux</div>
<div class="t" style="left:537.02px;top:396.64px;font-size:12px;font-weight:400;color:#777d83;font-family:&quot;Liberation Sans&quot;,sans-serif;letter-spacing:0.062px;">Victor</div>
<div class="t" style="left:537.02px;top:431.64px;font-size:12px;font-weight:700;color:#111;font-family:&quot;Liberation Sans&quot;,sans-serif;letter-spacing:-0.039px;">Doc un</div>
<div class="t" style="left:537.02px;top:446.64px;font-size:12px;font-weight:400;color:#777d83;font-family:&quot;Liberation Sans&quot;,sans-serif;letter-spacing:-0.032px;">Doc un</div>
<div class="t" style="left:837.02px;top:339.74px;font-size:12px;font-weight:400;color:#111;font-family:&quot;Liberation Sans&quot;,sans-serif;letter-spacing:0.021px;">Divers</div>
<div class="t" style="left:837.02px;top:389.84px;font-size:12px;font-weight:400;color:#111;font-family:&quot;Liberation Sans&quot;,sans-serif;letter-spacing:-0.014px;"><span style="color:#7a7f85">Parent</span> &gt; Enfant B</div>
<div class="t" style="left:837.02px;top:439.84px;font-size:12px;font-weight:400;color:#111;font-family:&quot;Liberation Sans&quot;,sans-serif;letter-spacing:0.026px;"><span style="color:#7a7f85">Parent</span> &gt; Enfant A</div>
<div class="t" style="left:1137.02px;top:339.74px;font-size:12px;font-weight:400;color:#111;font-family:&quot;Liberation Sans&quot;,sans-serif;letter-spacing:0.075px;">GED</div>
<div class="t" style="left:1137.02px;top:389.84px;font-size:12px;font-weight:400;color:#111;font-family:&quot;Liberation Sans&quot;,sans-serif;letter-spacing:0.045px;">Admin</div>
<div class="t" style="left:1137.02px;top:439.84px;font-size:12px;font-weight:400;color:#111;font-family:&quot;Liberation Sans&quot;,sans-serif;letter-spacing:0.075px;">GED</div>
<div class="t" style="left:1247.02px;top:328.59px;font-size:12px;font-weight:400;color:#111;font-family:&quot;Liberation Sans&quot;,sans-serif;letter-spacing:0.093px;">ET*****</div>
<div class="t" style="left:1247.02px;top:343.59px;font-size:12px;font-weight:400;color:#7a7f85;font-family:&quot;Liberation Sans&quot;,sans-serif;letter-spacing:0.044px;">CE*****</div>
<div class="t" style="left:1247.02px;top:378.59px;font-size:12px;font-weight:400;color:#111;font-family:&quot;Liberation Sans&quot;,sans-serif;letter-spacing:0.085px;">DEMO</div>
<div class="t" style="left:1247.02px;top:428.59px;font-size:12px;font-weight:400;color:#111;font-family:&quot;Liberation Sans&quot;,sans-serif;letter-spacing:0.093px;">ET*****</div>
<div class="t" style="left:1247.02px;top:443.59px;font-size:12px;font-weight:400;color:#7a7f85;font-family:&quot;Liberation Sans&quot;,sans-serif;letter-spacing:0.044px;">CE*****</div>
<div class="a" style="left:1577.5px;top:340.5px;width:1.5px;height:9px;background:#111"></div>
<div class="a" style="left:1577.5px;top:390.5px;width:1.5px;height:9px;background:#111"></div>
<div class="a" style="left:1577.5px;top:440.5px;width:1.5px;height:9px;background:#111"></div>
<div class="a" style="left:275px;top:1004px;width:1304px;height:15px;background:#f1f1f1"></div>
<div class="a" style="left:290px;top:1006px;width:695px;height:11px;background:#c1c1c1"></div>
<svg class="ic" style="left:280px;top:1008px;width:4.5px;height:7px" viewBox="0 0 4.5 7"><path d="M4.5,0V7L0,3.5Z" fill="#a3a3a3"/></svg>
<svg class="ic" style="left:1570px;top:1008px;width:4.5px;height:7px" viewBox="0 0 4.5 7"><path d="M0,0V7L4.5,3.5Z" fill="#505050"/></svg>
<div class="a" style="left:275px;top:1019px;width:1304px;height:1.2px;background:#aab5bb"></div>
<div class="t" style="left:294.92px;top:1030.64px;font-size:12px;font-weight:700;color:#999;font-family:&quot;Liberation Sans&quot;,sans-serif;letter-spacing:0.166px;">Rows :</div>
<div class="t" style="left:341.32px;top:1030.64px;font-size:12px;font-weight:700;color:#111;font-family:&quot;Liberation Sans&quot;,sans-serif;letter-spacing:0.353px;">3</div>
<div class="t" style="left:1495.32px;top:1030.64px;font-size:12px;font-weight:700;color:#999;font-family:&quot;Liberation Sans&quot;,sans-serif;letter-spacing:-0.035px;">Selected:</div>
<div class="t" style="left:1552.52px;top:1030.64px;font-size:12px;font-weight:700;color:#111;font-family:&quot;Liberation Sans&quot;,sans-serif;letter-spacing:-0.098px;">1</div>
<div class="a" style="left:1579px;top:195px;width:25px;height:830px;background:#eef1f6"></div>
<div class="a" style="left:1604px;top:152px;width:304px;height:908px;background:#fff;border-radius:12px"></div>
<div class="a" style="left:1591px;top:591px;width:2px;height:2px;background:#c4c4c4"></div>
<div class="a" style="left:1594.2px;top:591px;width:2px;height:2px;background:#c4c4c4"></div>
<div class="a" style="left:1591px;top:595px;width:2px;height:2px;background:#c4c4c4"></div>
<div class="a" style="left:1594.2px;top:595px;width:2px;height:2px;background:#c4c4c4"></div>
<div class="a" style="left:1591px;top:599px;width:2px;height:2px;background:#c4c4c4"></div>
<div class="a" style="left:1594.2px;top:599px;width:2px;height:2px;background:#c4c4c4"></div>
<div class="a" style="left:1591px;top:603px;width:2px;height:2px;background:#c4c4c4"></div>
<div class="a" style="left:1594.2px;top:603px;width:2px;height:2px;background:#c4c4c4"></div>
<div class="a" style="left:1591px;top:607px;width:2px;height:2px;background:#c4c4c4"></div>
<div class="a" style="left:1594.2px;top:607px;width:2px;height:2px;background:#c4c4c4"></div>
<div class="a" style="left:1591px;top:611px;width:2px;height:2px;background:#c4c4c4"></div>
<div class="a" style="left:1594.2px;top:611px;width:2px;height:2px;background:#c4c4c4"></div>
<div class="a" style="left:1591px;top:615px;width:2px;height:2px;background:#c4c4c4"></div>
<div class="a" style="left:1594.2px;top:615px;width:2px;height:2px;background:#c4c4c4"></div>
<div class="a" style="left:1591px;top:619px;width:2px;height:2px;background:#c4c4c4"></div>
<div class="a" style="left:1594.2px;top:619px;width:2px;height:2px;background:#c4c4c4"></div>
<div class="a" style="left:1619px;top:167px;width:31px;height:25px;background:#2492d6;border-radius:50%"></div>
<svg class="ic" style="left:1626.4px;top:172.35px;width:15px;height:13.5px" viewBox="0 0 512 512" preserveAspectRatio="none"><path fill="#fff" fill-rule="evenodd" d="M216 0h80c13.3 0 24 10.7 24 24v168h87.7c17.8 0 26.7 21.5 14.1 34.1L269.7 378.3c-7.5 7.5-19.8 7.5-27.3 0L90.1 226.1c-12.6-12.6-3.7-34.1 14.1-34.1H192V24c0-13.3 10.7-24 24-24zm296 376v112c0 13.3-10.7 24-24 24H24c-13.3 0-24-10.7-24-24V376c0-13.3 10.7-24 24-24h146.7l49 49c20.1 20.1 52.5 20.1 72.6 0l49-49H488c13.3 0 24 10.7 24 24zm-124 88c0-11-9-20-20-20s-20 9-20 20 9 20 20 20 20-9 20-20zm64 0c0-11-9-20-20-20s-20 9-20 20 9 20 20 20 20-9 20-20z"/></svg>
<div class="a" style="left:1658px;top:167px;width:31px;height:25px;background:#2492d6;border-radius:50%"></div>
<svg class="ic" style="left:1667.6999999999998px;top:172.20000000000002px;width:10.8px;height:14.2px" viewBox="0 0 384 512" preserveAspectRatio="none"><path fill="#fff" fill-rule="evenodd" d="M224 136V0H24C10.7 0 0 10.7 0 24v464c0 13.3 10.7 24 24 24h336c13.3 0 24-10.7 24-24V160H248c-13.2 0-24-10.8-24-24zm65.18 216.01H224v80c0 8.84-7.16 16-16 16h-32c-8.840 0-16-7.16-16-16v-80H94.82c-14.28 0-21.41-17.29-11.27-27.36l96.42-95.7c6.65-6.61 17.39-6.61 24.04 0l96.42 95.7c10.15 10.07 3.03 27.36-11.25 27.36zM377 105L279.1 7c-4.5-4.5-10.6-7-17-7H256v128h128v-6.1c0-6.3-2.5-12.4-7-16.9z"/></svg>
<div class="a" style="left:1697px;top:167px;width:31px;height:25px;background:#2492d6;border-radius:50%"></div>
<svg class="ic" style="left:1705.85px;top:172.35px;width:12.9px;height:13.5px" viewBox="0 0 448 512" preserveAspectRatio="none"><path fill="#fff" fill-rule="evenodd" d="M433.941 65.941l-51.882-51.882A48 48 0 0 0 348.118 0H176c-26.51 0-48 21.49-48 48v48H48c-26.51 0-48 21.49-48 48v320c0 26.51 21.49 48 48 48h224c26.51 0 48-21.49 48-48v-48h80c26.51 0 48-21.49 48-48V99.882a48 48 0 0 0-14.059-33.941zM266 464H54a6 6 0 0 1-6-6V150a6 6 0 0 1 6-6h74v224c0 26.51 21.49 48 48 48h96v42a6 6 0 0 1-6 6zm128-96H182a6 6 0 0 1-6-6V54a6 6 0 0 1 6-6h106v88c0 13.255 10.745 24 24 24h88v202a6 6 0 0 1-6 6zm6-256h-64V48h9.632c1.591 0 3.117.632 4.243 1.757l48.368 48.368a6 6 0 0 1 1.757 4.243V112z"/></svg>
<div class="a" style="left:1736px;top:167px;width:31px;height:25px;background:#2492d6;border-radius:50%"></div>
<svg class="ic" style="left:1745.1px;top:172.35px;width:12.8px;height:13.5px" viewBox="0 0 448 512" preserveAspectRatio="none"><path fill="#fff" fill-rule="evenodd" d="M352 320c-22.608 0-43.387 7.819-59.79 20.895l-102.486-64.054a96.551 96.551 0 0 0 0-41.683l102.486-64.054C308.613 184.181 329.392 192 352 192c53.019 0 96-42.981 96-96S405.019 0 352 0s-96 42.981-96 96c0 7.158.79 14.13 2.276 20.841L155.79 180.895C139.387 167.819 118.608 160 96 160c-53.019 0-96 42.981-96 96s42.981 96 96 96c22.608 0 43.387-7.819 59.79-20.895l102.486 64.054A96.301 96.301 0 0 0 256 416c0 53.019 42.981 96 96 96s96-42.981 96-96-42.981-96-96-96z"/></svg>
<div class="a" style="left:1775px;top:167px;width:31px;height:25px;border:1px solid #2492d6;border-radius:50%;background:#fff"></div>
<svg class="ic" style="left:1781.4px;top:172.75px;width:17.6px;height:11.5px" viewBox="0 0 640 512" preserveAspectRatio="none"><path fill="#2492d6" fill-rule="evenodd" d="M192 256c61.9 0 112-50.1 112-112S253.9 32 192 32 80 82.1 80 144s50.1 112 112 112zm76.8 32h-8.3c-20.8 10-43.9 16-68.5 16s-47.6-6-68.5-16h-8.3C51.6 288 0 339.6 0 403.2V432c0 26.5 21.5 48 48 48h288c26.5 0 48-21.5 48-48v-28.8c0-63.6-51.6-115.2-115.2-115.2zM480 256c53 0 96-43 96-96s-43-96-96-96-96 43-96 96 43 96 96 96zm48 32h-3.8c-13.9 4.8-28.6 8-44.2 8s-30.3-3.2-44.2-8H432c-20.4 0-39.2 5.9-55.7 15.4 24.4 26.3 39.7 61.2 39.7 99.8v38.4c0 2.2-.5 4.3-.6 6.4H592c26.5 0 48-21.5 48-48 0-61.9-50.1-112-112-112z"/></svg>
<div class="a" style="left:1814px;top:167px;width:31px;height:25px;background:#2492d6;border-radius:50%"></div>
<svg class="ic" style="left:1822.1000000000001px;top:172.5px;width:14.2px;height:12px" viewBox="0 0 512 512" preserveAspectRatio="none"><path fill="#fff" fill-rule="evenodd" d="M462.3 62.6C407.5 15.9 326 24.3 275.7 76.2L256 96.5l-19.7-20.3C186.1 24.3 104.5 15.9 49.7 62.6c-62.8 53.6-66.1 149.8-9.9 207.9l193.5 199.8c12.5 12.9 32.8 12.9 45.3 0l193.5-199.8c56.3-58.1 53-154.3-9.8-207.9z"/></svg>
<div class="a" style="left:1619px;top:195.4px;width:31px;height:25px;background:#2492d6;border-radius:50%"></div>
<svg class="ic" style="left:1626.9499999999998px;top:200.29999999999998px;width:14.3px;height:13.6px" viewBox="0 0 512 512" preserveAspectRatio="none"><path fill="#fff" fill-rule="evenodd" d="M32 512h448v-64H32v64zm384-256h-66.56c-16.26 0-29.44-13.18-29.44-29.44v-9.46c0-27.37 8.88-53.41 21.46-77.72 9.11-17.61 12.9-38.39 9.05-60.42-6.77-38.78-38.47-70.7-77.26-77.45C212.62-9.04 160 37.33 160 96c0 14.160 3.12 27.54 8.69 39.58C182.02 164.43 192 194.7 192 226.49v.07c0 16.26-13.18 29.44-29.44 29.44H96c-53.02 0-96 42.98-96 96v32c0 17.67 14.33 32 32 32h448c17.67 0 32-14.33 32-32v-32c0-53.02-42.98-96-96-96z"/></svg>
<div class="a" style="left:1658px;top:195.4px;width:31px;height:25px;background:#e91e63;border-radius:50%"></div>
<svg class="ic" style="left:1667.0px;top:200.35px;width:12px;height:13.5px" viewBox="0 0 448 512" preserveAspectRatio="none"><path fill="#fff" fill-rule="evenodd" d="M32 464a48 48 0 0 0 48 48h288a48 48 0 0 0 48-48V128H32zm272-256a16 16 0 0 1 32 0v224a16 16 0 0 1-32 0zm-96 0a16 16 0 0 1 32 0v224a16 16 0 0 1-32 0zm-96 0a16 16 0 0 1 32 0v224a16 16 0 0 1-32 0zM432 32H312l-9.4-18.7A24 24 0 0 0 281.1 0H166.8a23.72 23.72 0 0 0-21.4 13.3L136 32H16A16 16 0 0 0 0 48v32a16 16 0 0 0 16 16h416a16 16 0 0 0 16-16V48a16 16 0 0 0-16-16z"/></svg>
<div class="a" style="left:1697px;top:195.4px;width:31px;height:25px;border:1px solid #f57c00;border-radius:50%;background:#fff"></div>
<svg class="ic" style="left:1705.0px;top:200.35px;width:14px;height:13.5px" viewBox="0 0 512 512" preserveAspectRatio="none"><path fill="#f57c00" fill-rule="evenodd" d="M432,320H400a16,16,0,0,0-16,16V448H64V128H208a16,16,0,0,0,16-16V80a16,16,0,0,0-16-16H48A48,48,0,0,0,0,112V464a48,48,0,0,0,48,48H400a48,48,0,0,0,48-48V336A16,16,0,0,0,432,320ZM488,0h-128c-21.37,0-32.05,25.91-17,41l35.73,35.73L135,320.37a24,24,0,0,0,0,34L157.67,377a24,24,0,0,0,34,0L435.28,133.32,471,169c15,15,41,4.5,41-17V24A24,24,0,0,0,488,0Z"/></svg>
<div class="a" style="left:1736px;top:195.4px;width:31px;height:25px;border:1px solid #5e4bb6;border-radius:50%;background:#fff"></div>
<svg class="ic" style="left:1745.6px;top:200.35px;width:10.8px;height:13.5px" viewBox="0 0 384 512" preserveAspectRatio="none"><path fill="#5e4bb6" fill-rule="evenodd" d="M288 248v28c0 6.6-5.4 12-12 12H108c-6.6 0-12-5.4-12-12v-28c0-6.6 5.4-12 12-12h168c6.6 0 12 5.4 12 12zm-12 72H108c-6.6 0-12 5.4-12 12v28c0 6.6 5.4 12 12 12h168c6.6 0 12-5.4 12-12v-28c0-6.6-5.4-12-12-12zm108-188.1V464c0 26.5-21.5 48-48 48H48c-26.5 0-48-21.5-48-48V48C0 21.5 21.5 0 48 0h204.1C264.8 0 277 5.1 286 14.1L369.9 98c9 8.9 14.1 21.2 14.1 33.9zm-128-80V128h76.1L256 51.9zM336 464V176H232c-13.3 0-24-10.7-24-24V48H48v416h288z"/></svg>
<div class="t" style="left:1618.42px;top:229.29px;font-size:19.5px;font-weight:700;color:#212529;font-family:&quot;Liberation Sans&quot;,sans-serif;letter-spacing:-0.117px;">Doc trois</div>
<div class="t" style="left:1618.42px;top:260.73px;font-size:14.5px;font-weight:700;color:#212529;font-family:&quot;Liberation Sans&quot;,sans-serif;letter-spacing:0.374px;">DOC230926-01610-2</div>
<div class="t" style="left:1618.50px;top:286.92px;font-size:12.5px;font-weight:700;color:#212529;font-family:&quot;Liberation Sans&quot;,sans-serif;letter-spacing:0.135px;"><span style="color:#b3b8bc">last modification by</span> GED (9/26/2023 3:30:13</div>
<div class="t" style="left:1618.50px;top:306.12px;font-size:12.5px;font-weight:700;color:#212529;font-family:&quot;Liberation Sans&quot;,sans-serif;letter-spacing:0.155px;">AM)</div>
<div class="t" style="left:1618.42px;top:330.73px;font-size:14.5px;font-weight:400;color:#333;font-family:&quot;Liberation Sans&quot;,sans-serif;letter-spacing:0.047px;">Ky</div>
<svg class="ic" style="left:1618px;top:372px;width:17.5px;height:15px" viewBox="0 0 576 512" preserveAspectRatio="none"><path fill="#2492d6" fill-rule="evenodd" d="M218.17 424.14c-2.95-5.92-8.09-6.52-10.17-6.52s-7.22.59-10.02 6.19l-7.67 15.34c-6.37 12.78-25.03 11.37-29.48-2.09L144 386.59l-10.61 31.88c-5.89 17.66-22.38 29.53-41 29.53H80c-8.84 0-16-7.16-16-16s7.16-16 16-16h12.39c4.83 0 9.11-3.08 10.64-7.66l18.19-54.64c3.3-9.81 12.44-16.41 22.78-16.41s19.48 6.59 22.77 16.41l13.88 41.64c19.75-16.19 54.06-9.7 66 14.16 1.89 3.78 5.49 5.95 9.36 6.26v-82.12l128-127.09V160H248c-13.2 0-24-10.8-24-24V0H24C10.7 0 0 10.7 0 24v464c0 13.3 10.7 24 24 24h336c13.3 0 24-10.7 24-24v-40l-128-.11c-16.12-.31-30.58-9.28-37.83-23.75zM384 121.9c0-6.3-2.5-12.4-7-16.9L279.1 7c-4.5-4.5-10.6-7-17-7H256v128h128v-6.1zm-96 225.06V416h68.99l161.68-162.78-67.88-67.88L288 346.96zm280.54-179.63l-31.870-31.87c-9.94-9.94-26.07-9.94-36.01 0l-27.25 27.25 67.88 67.88 27.25-27.25c9.95-9.94 9.95-26.07 0-36.01z"/></svg>
<div class="t" style="left:1639.10px;top:372.30px;font-size:15px;font-weight:400;color:#333;font-family:&quot;Liberation Sans&quot;,sans-serif;letter-spacing:0.263px;">Signatures</div>
<div class="a" style="left:1753.3px;top:363.3px;width:132.5px;height:31.4px;border:1px solid #2492d6;border-radius:16px"></div>
<svg class="ic" style="left:1761.7px;top:372.5px;width:11.3px;height:14.5px" viewBox="0 0 11.3 14.5"><path d="M0,0H7.3L11.3,4V14.5H0Z" fill="#2492d6"/><path d="M7.3,0V4H11.3Z" fill="#fff"/><path d="M1.8,11.5L3.5,9.5L4.8,11L6,9.8L7.5,11.2L9.5,10.5" fill="none" stroke="#fff" stroke-width="0.9"/></svg>
<div class="t" style="left:1776.14px;top:372.85px;font-size:14px;font-weight:400;color:#2492d6;font-family:&quot;Liberation Sans&quot;,sans-serif;letter-spacing:-0.103px;">Start a signature</div>
<div class="a" style="left:1626px;top:403px;width:267px;height:642px;overflow:hidden;background:#e6e6e9">
<div class="a" style="left:20px;top:33px;width:260px;height:374px;background:#fff"></div>
<div class="a" style="left:20px;top:418px;width:260px;height:230px;background:#fff"></div>
<div class="a" style="left:13px;top:33px;width:7px;height:615px;background:linear-gradient(90deg,rgba(0,0,0,0),rgba(0,0,0,0.08))"></div>
<div class="a" style="left:0;top:0;width:267px;height:33px;background:#f9f9fa;border-bottom:1px solid #d8d8db"></div>
<svg class="ic" style="left:8px;top:9px;width:16px;height:13.5px" viewBox="0 0 16 13.5"><rect x="1" y="1" width="14" height="11.5" rx="2" fill="none" stroke="#333" stroke-width="1.6"/><rect x="6" y="1" width="1.4" height="11.5" fill="#333"/><rect x="2.8" y="3.3" width="2" height="1" fill="#333"/><rect x="2.8" y="5.3" width="2" height="1" fill="#333"/><rect x="2.8" y="7.3" width="2" height="1" fill="#333"/></svg>
<svg class="ic" style="left:38px;top:7.6px;width:16px;height:16.5px" viewBox="0 0 16 16.5"><circle cx="6.5" cy="6.5" r="5.2" fill="none" stroke="#333" stroke-width="1.7"/><path d="M10.3,10.5L15,15.5" stroke="#333" stroke-width="2" stroke-linecap="round"/></svg>
<div class="a" style="left:61.3px;top:3px;width:55.5px;height:25.4px;background:#fff;border:1px solid #c8c8cc;border-radius:2px"></div>
<svg class="ic" style="left:200px;top:15px;width:12px;height:2px" viewBox="0 0 12 2"><rect width="12" height="1.8" fill="#333"/></svg>
<div class="a" style="left:220.5px;top:6px;width:1px;height:19.6px;background:#c9c9cc"></div>
<svg class="ic" style="left:227.7px;top:9px;width:14px;height:14px" viewBox="0 0 14 14"><rect x="0" y="6.1" width="14" height="1.8" fill="#333"/><rect x="6.1" y="0" width="1.8" height="14" fill="#333"/></svg>
<div class="a" style="left:45px;top:0;width:460px;height:1400px;transform:scale(0.469);transform-origin:0 0;font-family:&quot;Liberation Sans&quot;,sans-serif;font-size:10px;line-height:12.8px;color:#2b2b2b">
<div class="a" style="left:0;top:125.37px;width:457px;white-space:nowrap;">Il y a aujourd’hui trois cent quarante-huit ans six mois et dix-neuf jours que les parisiens s’éveillèrent au</div>
<div class="a" style="left:0;top:137.95px;width:457px;white-space:nowrap;">bruit de toutes les cloches sonnant à grande volée dans la triple enceinte de la Cité, de l’Université et</div>
<div class="a" style="left:0;top:150.53px;width:457px;white-space:nowrap;">de la Ville.</div>
<div class="a" style="left:0;top:169.94px;width:457px;white-space:nowrap;text-align:justify;text-align-last:justify;">Ce n’est cependant pas un jour dont l’histoire ait gardé souvenir que le 6 janvier 1482. Rien de notable</div>
<div class="a" style="left:0;top:183.12px;width:457px;white-space:nowrap;text-align:justify;text-align-last:justify;">dans l’événement qui mettait ainsi en branle, dès le matin, les cloches et les bourgeois de Paris. Ce</div>
<div class="a" style="left:0;top:196.30px;width:457px;white-space:nowrap;text-align:justify;text-align-last:justify;">n’était ni un assaut de picards ou de bourguignons, ni une châsse menée en procession, ni une révolte</div>
<div class="a" style="left:0;top:209.48px;width:457px;white-space:nowrap;text-align:justify;text-align-last:justify;">d’écoliers dans la vigne de Laas, ni une entrée de notredit très redouté seigneur monsieur le roi, ni</div>
<div class="a" style="left:0;top:222.66px;width:457px;white-space:nowrap;text-align:justify;text-align-last:justify;">même une belle pendaison de larrons et de larronnesses à la Justice de Paris. Ce n’était pas non plus</div>
<div class="a" style="left:0;top:235.84px;width:457px;white-space:nowrap;text-align:justify;text-align-last:justify;">la survenue, si fréquente au quinzième siècle, de quelque ambassade chamarrée et empanachée. Il y</div>
<div class="a" style="left:0;top:249.02px;width:457px;white-space:nowrap;text-align:justify;text-align-last:justify;">avait à peine deux jours que la dernière cavalcade de ce genre, celle des ambassadeurs flamands</div>
<div class="a" style="left:0;top:262.20px;width:457px;white-space:nowrap;text-align:justify;text-align-last:justify;">chargés de conclure le mariage entre le dauphin et Marguerite de Flandre, avait fait son entrée à Paris,</div>
<div class="a" style="left:0;top:275.38px;width:457px;white-space:nowrap;text-align:justify;text-align-last:justify;">au grand ennui de M. le cardinal de Bourbon, qui, pour plaire au roi, avait dû faire bonne mine à toute</div>
<div class="a" style="left:0;top:288.56px;width:457px;white-space:nowrap;text-align:justify;text-align-last:justify;">cette rustique cohue de bourgmestres flamands, et les régaler, en son hôtel de Bourbon, d’une moult</div>
<div class="a" style="left:0;top:301.74px;width:457px;white-space:nowrap;text-align:justify;text-align-last:justify;">belle moralité, sotie et farce, tandis qu’une pluie battante inondait à sa porte ses magnifiques</div>
<div class="a" style="left:0;top:314.93px;width:457px;white-space:nowrap;">tapisseries.</div>
<div class="a" style="left:0;top:335.61px;width:457px;white-space:nowrap;text-align:justify;text-align-last:justify;">Le 6 janvier, ce qui mettait en émotion tout le populaire de Paris, comme dit Jean de Troyes, c’était la</div>
<div class="a" style="left:0;top:348.40px;width:457px;white-space:nowrap;">double solennité, réunie depuis un temps immémorial, du jour des Rois et de la Fête des Fous.</div>
<div class="a" style="left:0;top:367.38px;width:457px;white-space:nowrap;text-align:justify;text-align-last:justify;">Ce jour-là, il devait y avoir feu de joie à la Grève, plantation de mai à la chapelle de Braque et mystère</div>
<div class="a" style="left:0;top:381.02px;width:457px;white-space:nowrap;text-align:justify;text-align-last:justify;">au Palais de Justice. Le cri en avait été fait la veille à son de trompe dans les carrefours, par les gens</div>
<div class="a" style="left:0;top:394.67px;width:457px;white-space:nowrap;">de M. le prévôt, en beaux hoquetons de camelot violet, avec de grandes croix blanches sur la poitrine.</div>
<div class="a" style="left:0;top:414.71px;width:457px;white-space:nowrap;text-align:justify;text-align-last:justify;">La foule des bourgeois et des bourgeoises s’acheminait donc de toutes parts dès le matin, maisons et</div>
<div class="a" style="left:0;top:427.83px;width:457px;white-space:nowrap;text-align:justify;text-align-last:justify;">boutiques fermées, vers l’un des trois endroits désignés. Chacun avait pris parti, qui pour le feu de joie,</div>
<div class="a" style="left:0;top:440.94px;width:457px;white-space:nowrap;text-align:justify;text-align-last:justify;">qui pour le mai, qui pour le mystère. Il faut dire, à l’éloge de l’antique bon sens des badauds de Paris,</div>
<div class="a" style="left:0;top:454.05px;width:457px;white-space:nowrap;text-align:justify;text-align-last:justify;">que la plus grande partie de cette foule se dirigeait vers le feu de joie, lequel était tout à fait de saison,</div>
<div class="a" style="left:0;top:467.16px;width:457px;white-space:nowrap;text-align:justify;text-align-last:justify;">ou vers le mystère, qui devait être représenté dans la grand’salle du Palais bien couverte et bien close,</div>
<div class="a" style="left:0;top:480.28px;width:457px;white-space:nowrap;text-align:justify;text-align-last:justify;">et que les curieux s’accordaient à laisser le pauvre mai mal fleuri grelotter tout seul sous le ciel de</div>
<div class="a" style="left:0;top:493.39px;width:457px;white-space:nowrap;">janvier dans le cimetière de la chapelle de Braque.</div>
<div class="a" style="left:0;top:513.43px;width:457px;white-space:nowrap;text-align:justify;text-align-last:justify;">Le peuple affluait surtout dans les avenues du Palais de Justice, parce qu’on savait que les</div>
<div class="a" style="left:0;top:527.08px;width:457px;white-space:nowrap;text-align:justify;text-align-last:justify;">ambassadeurs flamands, arrivés de la surveille, se proposaient d’assister à la représentation du</div>
<div class="a" style="left:0;top:540.72px;width:457px;white-space:nowrap;">mystère et à l’élection du pape des fous, laquelle devait se faire également dans la grand’salle.</div>
<div class="a" style="left:0;top:560.13px;width:457px;white-space:nowrap;text-align:justify;text-align-last:justify;">Ce n’était pas chose aisée de pénétrer ce jour-là dans cette grand’salle, réputée cependant alors la</div>
<div class="a" style="left:0;top:571.54px;width:457px;white-space:nowrap;text-align:justify;text-align-last:justify;">plus grande enceinte couverte qui fût au monde. (Il est vrai que Sauval n’avait pas encore mesuré la</div>
<div class="a" style="left:0;top:582.94px;width:457px;white-space:nowrap;text-align:justify;text-align-last:justify;">grande salle du château de Montargis.) La place du Palais, encombrée de peuple, offrait aux curieux</div>
<div class="a" style="left:0;top:594.35px;width:457px;white-space:nowrap;text-align:justify;text-align-last:justify;">des fenêtres l’aspect d’une mer; dans laquelle cinq ou six rues, comme autant d’embouchures de</div>
<div class="a" style="left:0;top:605.76px;width:457px;white-space:nowrap;text-align:justify;text-align-last:justify;">fleuves, dégorgeaient à chaque instant de nouveaux flots de têtes. Les ondes de cette foule, sans</div>
<div class="a" style="left:0;top:617.16px;width:457px;white-space:nowrap;text-align:justify;text-align-last:justify;">cesse grossies, se heurtaient aux angles des maisons qui s’avançaient çà et là, comme autant de</div>
<div class="a" style="left:0;top:628.57px;width:457px;white-space:nowrap;text-align:justify;text-align-last:justify;">promontoires, dans le bassin irrégulier de la place. Au centre de la haute façade gothique[1] du Palais,</div>
<div class="a" style="left:0;top:639.98px;width:457px;white-space:nowrap;text-align:justify;text-align-last:justify;">le grand escalier, sans relâche remonté et descendu par un double courant qui, après s’être brisé sous</div>
<div class="a" style="left:0;top:651.39px;width:457px;white-space:nowrap;text-align:justify;text-align-last:justify;">le perron intermédiaire, s’épandait à larges vagues sur ses deux pentes latérales, le grand escalier, dis-</div>
<div class="a" style="left:0;top:662.79px;width:457px;white-space:nowrap;text-align:justify;text-align-last:justify;">je, ruisselait incessamment dans la place comme une cascade dans un lac. Les cris, les rires, le</div>
<div class="a" style="left:0;top:674.20px;width:457px;white-space:nowrap;text-align:justify;text-align-last:justify;">trépignement de ces mille pieds faisaient un grand bruit et une grande clameur. De temps en temps</div>
<div class="a" style="left:0;top:685.61px;width:457px;white-space:nowrap;text-align:justify;text-align-last:justify;">cette clameur et ce bruit redoublaient, le courant qui poussait toute cette foule vers le grand escalier</div>
<div class="a" style="left:0;top:697.01px;width:457px;white-space:nowrap;text-align:justify;text-align-last:justify;">rebroussait, se troublait, tourbillonnait. C’était une bourrade d’un archer ou le cheval d’un sergent de la</div>
<div class="a" style="left:0;top:708.42px;width:457px;white-space:nowrap;text-align:justify;text-align-last:justify;">prévôté qui ruait pour rétablir l’ordre ; admirable tradition que la prévôté a léguée à la connétablie, la</div>
<div class="a" style="left:0;top:719.83px;width:457px;white-space:nowrap;">connétablie à la maréchaussée, et la maréchaussée à notre gendarmerie de Paris.</div>
<div class="a" style="left:0;top:738.81px;width:457px;white-space:nowrap;text-align:justify;text-align-last:justify;">Aux portes, aux fenêtres, aux lucarnes, sur les toits, fourmillaient des milliers de bonnes figures</div>
<div class="a" style="left:0;top:751.67px;width:457px;white-space:nowrap;text-align:justify;text-align-last:justify;">bourgeoises, calmes et honnêtes, regardant le palais, regardant la cohue, et n’en demandant pas</div>
<div class="a" style="left:0;top:764.53px;width:457px;white-space:nowrap;text-align:justify;text-align-last:justify;">davantage ; car bien des gens à Paris se contentent du spectacle des spectateurs, et c’est déjà pour</div>
<div class="a" style="left:0;top:777.40px;width:457px;white-space:nowrap;">nous une chose très curieuse qu’une muraille derrière laquelle il se passe quelque chose.</div>
<div class="a" style="left:0;top:945.42px;width:457px;white-space:nowrap;text-align:justify;text-align-last:justify;">S’il pouvait nous être donné à nous, hommes de 1830, de nous mêler en pensée à ces parisiens du</div>
<div class="a" style="left:0;top:958.49px;width:457px;white-space:nowrap;text-align:justify;text-align-last:justify;">quinzième siècle et d’entrer avec eux, tiraillés, coudoyés, culbutés, dans cette immense salle du Palais,</div>
<div class="a" style="left:0;top:971.57px;width:457px;white-space:nowrap;text-align:justify;text-align-last:justify;">si étroite le 6 janvier 1482, le spectacle ne serait ni sans intérêt ni sans charme, et nous n’aurions</div>
<div class="a" style="left:0;top:984.65px;width:457px;white-space:nowrap;">autour de nous que des choses si vieilles qu’elles nous sembleraient toutes neuves.</div>
<div class="a" style="left:0;top:1005.97px;width:457px;white-space:nowrap;text-align:justify;text-align-last:justify;">Si le lecteur y consent, nous essaierons de retrouver par la pensée l’impression qu’il eût éprouvée avec</div>
<div class="a" style="left:0;top:1018.44px;width:457px;white-space:nowrap;text-align:justify;text-align-last:justify;">nous en franchissant le seuil de cette grand’salle au milieu de cette cohue en surcot, en hoqueton et en</div>
<div class="a" style="left:0;top:1030.92px;width:457px;white-space:nowrap;">cotte-hardie.</div>
<div class="a" style="left:0;top:1050.11px;width:457px;white-space:nowrap;text-align:justify;text-align-last:justify;">Et d’abord, bourdonnement dans les oreilles, éblouissement dans les yeux. Au-dessus de nos têtes une</div>
<div class="a" style="left:0;top:1063.40px;width:457px;white-space:nowrap;text-align:justify;text-align-last:justify;">double voûte en ogive, lambrissée en sculptures de bois, peinte d’azur, fleurdelysée en or ; sous nos</div>
<div class="a" style="left:0;top:1076.70px;width:457px;white-space:nowrap;text-align:justify;text-align-last:justify;">pieds, un pavé alternatif de marbre blanc et noir. À quelques pas de nous, un énorme pilier, puis un</div>
<div class="a" style="left:0;top:1089.99px;width:457px;white-space:nowrap;text-align:justify;text-align-last:justify;">autre, puis un autre ; en tout sept piliers dans la longueur de la salle, soutenant au milieu de sa largeur</div>
<div class="a" style="left:0;top:1103.29px;width:457px;white-space:nowrap;text-align:justify;text-align-last:justify;">les retombées de la double voûte. Autour des quatre premiers piliers, des boutiques de marchands, tout</div>
<div class="a" style="left:0;top:1116.59px;width:457px;white-space:nowrap;text-align:justify;text-align-last:justify;">étincelantes de verre et de clinquants ; autour des trois derniers, des bancs de bois de chêne, usés et</div>
<div class="a" style="left:0;top:1129.88px;width:457px;white-space:nowrap;text-align:justify;text-align-last:justify;">polis par le haut-de-chausses des plaideurs et la robe des procureurs. À l’entour de la salle, le long de</div>
<div class="a" style="left:0;top:1143.18px;width:457px;white-space:nowrap;text-align:justify;text-align-last:justify;">la haute muraille, entre les portes, entre les croisées, entre les piliers, l’interminable rangée des statues</div>
<div class="a" style="left:0;top:1156.47px;width:457px;white-space:nowrap;text-align:justify;text-align-last:justify;">de tous les rois de France depuis Pharamond ; les rois fainéants, les bras pendants et les yeux</div>
<div class="a" style="left:0;top:1169.77px;width:457px;white-space:nowrap;text-align:justify;text-align-last:justify;">baissés ; les rois vaillants et bataillards, la tête et les mains hardiment levées au ciel. Puis, aux longues</div>
<div class="a" style="left:0;top:1183.06px;width:457px;white-space:nowrap;text-align:justify;text-align-last:justify;">fenêtres ogives, des vitraux de mille couleurs ; aux larges issues de la salle, de riches portes finement</div>
<div class="a" style="left:0;top:1196.36px;width:457px;white-space:nowrap;text-align:justify;text-align-last:justify;">sculptées ; et le tout, voûtes, piliers, murailles, chambranles, lambris, portes, statues, recouvert du haut</div>
<div class="a" style="left:0;top:1209.66px;width:457px;white-space:nowrap;text-align:justify;text-align-last:justify;">en bas d’une splendide enluminure bleu et or, qui, déjà un peu ternie à l’époque où nous la voyons,</div>
<div class="a" style="left:0;top:1222.95px;width:457px;white-space:nowrap;text-align:justify;text-align-last:justify;">avait presque entièrement disparu sous la poussière et les toiles d’araignée en l’an de grâce 1549, où</div>
<div class="a" style="left:0;top:1236.25px;width:457px;white-space:nowrap;">du Breul l’admirait encore par tradition.</div>
<div class="a" style="left:0;top:1255.44px;width:457px;white-space:nowrap;text-align:justify;text-align-last:justify;">Qu’on se représente maintenant cette immense salle oblongue, éclairée de la clarté blafarde d’un jour</div>
<div class="a" style="left:0;top:1268.94px;width:457px;white-space:nowrap;text-align:justify;text-align-last:justify;">de janvier, envahie par une foule bariolée et bruyante qui dérive le long des murs et tournoie autour des</div>
<div class="a" style="left:0;top:1282.44px;width:457px;white-space:nowrap;text-align:justify;text-align-last:justify;">sept piliers, et l’on aura déjà une idée confuse de l’ensemble du tableau dont nous allons essayer</div>
<div class="a" style="left:0;top:1295.95px;width:457px;white-space:nowrap;">d’indiquer plus précisément les curieux détails.</div>
<div class="a" style="left:0;top:1314.29px;width:457px;white-space:nowrap;text-align:justify;text-align-last:justify;">Il est certain que, si Ravaillac n’avait point assassiné Henri IV, il n’y aurait point eu de pièces du procès</div>
<div class="a" style="left:0;top:1326.65px;width:457px;white-space:nowrap;text-align:justify;text-align-last:justify;">de Ravaillac déposées au greffe du Palais de Justice ; point de complices intéressés à faire disparaître</div>
</div>
<div class="a" style="left:0;top:627px;width:267px;height:15px;background:#f1f1f1"></div>
<div class="a" style="left:15px;top:629px;width:198px;height:11px;background:#c1c1c1"></div>
<svg class="ic" style="left:5px;top:631px;width:4.5px;height:7px" viewBox="0 0 4.5 7"><path d="M4.5,0V7L0,3.5Z" fill="#a3a3a3"/></svg>
<svg class="ic" style="left:257px;top:631px;width:4.5px;height:7px" viewBox="0 0 4.5 7"><path d="M0,0V7L4.5,3.5Z" fill="#505050"/></svg>
</div>
<div class="t" style="left:1727.98px;top:412.00px;font-size:13px;font-weight:400;color:#222;font-family:&quot;Liberation Sans&quot;,sans-serif;letter-spacing:-0.824px;">1</div>
<div class="t" style="left:1747.48px;top:412.00px;font-size:13px;font-weight:400;color:#222;font-family:&quot;Liberation Sans&quot;,sans-serif;letter-spacing:-0.244px;">of 3</div>
</body></html>
